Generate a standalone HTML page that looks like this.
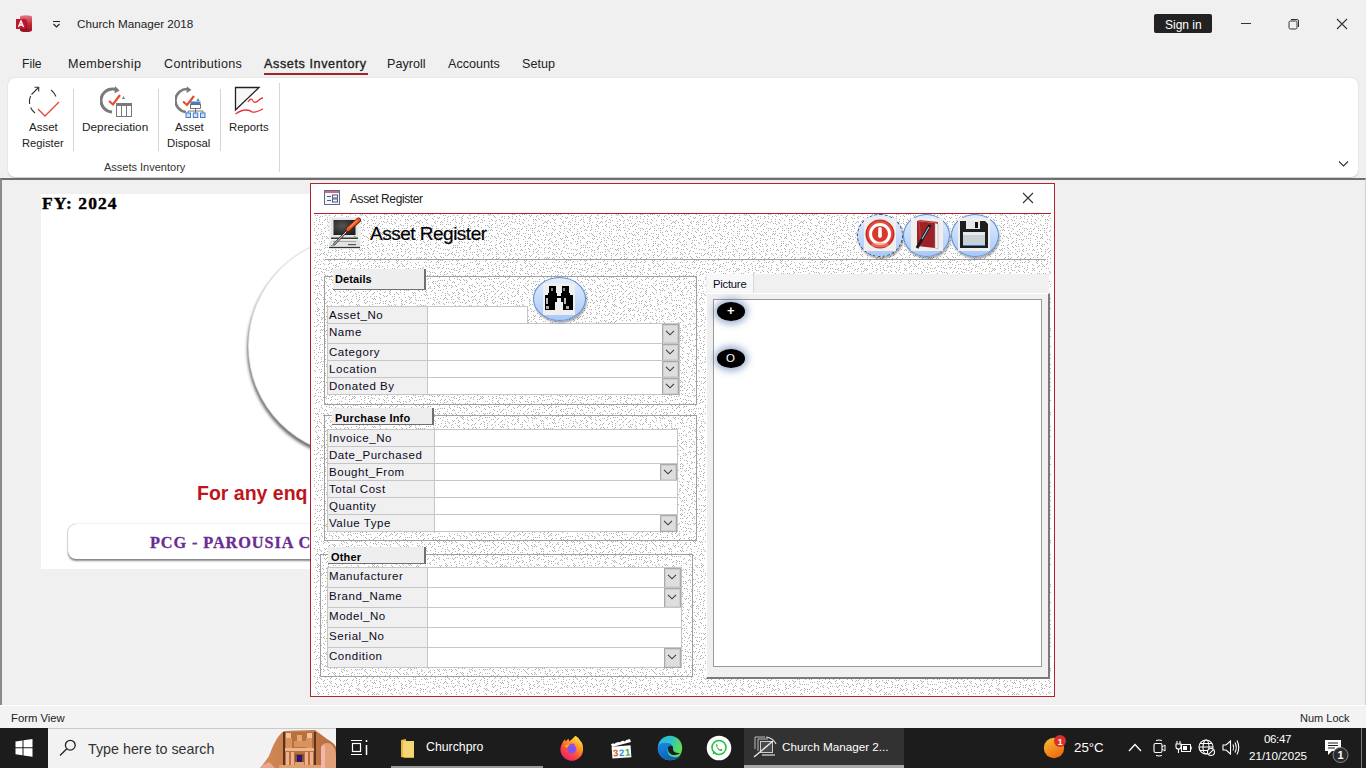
<!DOCTYPE html>
<html><head><meta charset="utf-8">
<style>
*{margin:0;padding:0;box-sizing:border-box}
html,body{width:1366px;height:768px;overflow:hidden;background:#f0f0f0;font-family:"Liberation Sans",sans-serif;color:#000}
.a{position:absolute}
.t{position:absolute;line-height:1;white-space:nowrap}
.ser{font-family:"Liberation Serif",serif}
</style></head><body>
<!-- svg defs -->
<svg width="0" height="0" style="position:absolute"><defs>
<pattern id="stip" width="128" height="128" patternUnits="userSpaceOnUse"><path fill="#b3b3b3" d="M1 1h1v1h-1zM3 1h1v1h-1zM5 3h1v1h-1zM6 2h1v1h-1zM8 2h1v1h-1zM11 1h1v1h-1zM15 1h1v1h-1zM13 3h1v1h-1zM19 3h1v1h-1zM17 3h1v1h-1zM21 1h1v1h-1zM20 2h1v1h-1zM27 1h1v1h-1zM25 3h1v1h-1zM28 0h1v1h-1zM31 3h1v1h-1zM34 2h1v1h-1zM32 2h1v1h-1zM37 3h1v1h-1zM36 0h1v1h-1zM41 1h1v1h-1zM41 3h1v1h-1zM47 1h1v1h-1zM46 0h1v1h-1zM48 0h1v1h-1zM51 1h1v1h-1zM53 3h1v1h-1zM52 2h1v1h-1zM59 3h1v1h-1zM56 0h1v1h-1zM62 2h1v1h-1zM60 2h1v1h-1zM67 3h1v1h-1zM66 2h1v1h-1zM70 0h1v1h-1zM70 2h1v1h-1zM74 2h1v1h-1zM72 0h1v1h-1zM77 1h1v1h-1zM78 2h1v1h-1zM82 0h1v1h-1zM80 0h1v1h-1zM84 0h1v1h-1zM87 1h1v1h-1zM89 1h1v1h-1zM88 2h1v1h-1zM94 2h1v1h-1zM95 1h1v1h-1zM99 3h1v1h-1zM98 0h1v1h-1zM101 1h1v1h-1zM102 2h1v1h-1zM104 0h1v1h-1zM107 1h1v1h-1zM111 1h1v1h-1zM108 0h1v1h-1zM115 1h1v1h-1zM114 0h1v1h-1zM118 0h1v1h-1zM116 0h1v1h-1zM123 3h1v1h-1zM120 2h1v1h-1zM125 3h1v1h-1zM126 0h1v1h-1zM2 6h1v1h-1zM2 4h1v1h-1zM5 7h1v1h-1zM5 5h1v1h-1zM10 6h1v1h-1zM11 5h1v1h-1zM13 7h1v1h-1zM13 5h1v1h-1zM19 7h1v1h-1zM19 5h1v1h-1zM20 6h1v1h-1zM20 4h1v1h-1zM26 4h1v1h-1zM27 7h1v1h-1zM31 7h1v1h-1zM28 4h1v1h-1zM35 7h1v1h-1zM32 4h1v1h-1zM39 5h1v1h-1zM36 6h1v1h-1zM42 6h1v1h-1zM40 6h1v1h-1zM46 4h1v1h-1zM47 7h1v1h-1zM49 5h1v1h-1zM50 6h1v1h-1zM54 6h1v1h-1zM53 7h1v1h-1zM58 6h1v1h-1zM57 5h1v1h-1zM60 6h1v1h-1zM62 4h1v1h-1zM66 4h1v1h-1zM67 7h1v1h-1zM70 4h1v1h-1zM69 7h1v1h-1zM73 5h1v1h-1zM73 7h1v1h-1zM77 7h1v1h-1zM77 5h1v1h-1zM81 5h1v1h-1zM82 6h1v1h-1zM84 4h1v1h-1zM86 6h1v1h-1zM91 5h1v1h-1zM91 7h1v1h-1zM93 5h1v1h-1zM94 6h1v1h-1zM96 4h1v1h-1zM97 5h1v1h-1zM103 7h1v1h-1zM100 6h1v1h-1zM105 7h1v1h-1zM106 6h1v1h-1zM111 5h1v1h-1zM110 4h1v1h-1zM113 5h1v1h-1zM112 6h1v1h-1zM118 4h1v1h-1zM119 5h1v1h-1zM121 7h1v1h-1zM123 7h1v1h-1zM127 7h1v1h-1zM124 4h1v1h-1zM0 10h1v1h-1zM0 8h1v1h-1zM4 10h1v1h-1zM6 10h1v1h-1zM8 10h1v1h-1zM8 8h1v1h-1zM13 11h1v1h-1zM14 8h1v1h-1zM17 9h1v1h-1zM19 9h1v1h-1zM22 8h1v1h-1zM21 11h1v1h-1zM26 10h1v1h-1zM27 11h1v1h-1zM29 9h1v1h-1zM30 8h1v1h-1zM35 11h1v1h-1zM32 8h1v1h-1zM36 10h1v1h-1zM38 8h1v1h-1zM43 11h1v1h-1zM40 8h1v1h-1zM47 9h1v1h-1zM45 11h1v1h-1zM50 10h1v1h-1zM49 11h1v1h-1zM53 9h1v1h-1zM55 11h1v1h-1zM57 11h1v1h-1zM59 9h1v1h-1zM63 11h1v1h-1zM61 9h1v1h-1zM65 9h1v1h-1zM64 10h1v1h-1zM68 10h1v1h-1zM70 8h1v1h-1zM72 8h1v1h-1zM75 9h1v1h-1zM77 9h1v1h-1zM78 10h1v1h-1zM80 8h1v1h-1zM81 9h1v1h-1zM86 10h1v1h-1zM87 11h1v1h-1zM91 9h1v1h-1zM89 11h1v1h-1zM93 11h1v1h-1zM93 9h1v1h-1zM97 11h1v1h-1zM99 11h1v1h-1zM101 9h1v1h-1zM102 8h1v1h-1zM105 9h1v1h-1zM104 8h1v1h-1zM109 11h1v1h-1zM108 8h1v1h-1zM113 9h1v1h-1zM112 8h1v1h-1zM119 11h1v1h-1zM117 11h1v1h-1zM121 9h1v1h-1zM120 8h1v1h-1zM126 8h1v1h-1zM126 10h1v1h-1zM0 14h1v1h-1zM2 12h1v1h-1zM4 14h1v1h-1zM7 15h1v1h-1zM10 14h1v1h-1zM11 13h1v1h-1zM15 15h1v1h-1zM14 12h1v1h-1zM17 13h1v1h-1zM18 12h1v1h-1zM21 13h1v1h-1zM21 15h1v1h-1zM25 15h1v1h-1zM26 12h1v1h-1zM28 12h1v1h-1zM28 14h1v1h-1zM32 12h1v1h-1zM33 15h1v1h-1zM36 12h1v1h-1zM39 13h1v1h-1zM43 15h1v1h-1zM41 15h1v1h-1zM46 12h1v1h-1zM47 13h1v1h-1zM49 13h1v1h-1zM49 15h1v1h-1zM55 13h1v1h-1zM53 13h1v1h-1zM58 14h1v1h-1zM59 15h1v1h-1zM60 12h1v1h-1zM62 12h1v1h-1zM65 15h1v1h-1zM66 12h1v1h-1zM68 14h1v1h-1zM70 14h1v1h-1zM72 14h1v1h-1zM73 15h1v1h-1zM79 15h1v1h-1zM76 14h1v1h-1zM82 12h1v1h-1zM80 14h1v1h-1zM84 12h1v1h-1zM84 14h1v1h-1zM90 14h1v1h-1zM88 14h1v1h-1zM92 14h1v1h-1zM93 13h1v1h-1zM99 13h1v1h-1zM96 12h1v1h-1zM102 14h1v1h-1zM102 12h1v1h-1zM106 14h1v1h-1zM104 12h1v1h-1zM110 14h1v1h-1zM111 15h1v1h-1zM113 15h1v1h-1zM112 12h1v1h-1zM118 12h1v1h-1zM118 14h1v1h-1zM122 12h1v1h-1zM122 14h1v1h-1zM127 15h1v1h-1zM124 14h1v1h-1zM0 16h1v1h-1zM2 18h1v1h-1zM7 19h1v1h-1zM7 17h1v1h-1zM9 19h1v1h-1zM11 17h1v1h-1zM14 16h1v1h-1zM15 19h1v1h-1zM16 16h1v1h-1zM19 19h1v1h-1zM21 19h1v1h-1zM20 16h1v1h-1zM27 17h1v1h-1zM25 17h1v1h-1zM29 19h1v1h-1zM30 18h1v1h-1zM33 19h1v1h-1zM35 17h1v1h-1zM39 17h1v1h-1zM39 19h1v1h-1zM41 19h1v1h-1zM41 17h1v1h-1zM47 19h1v1h-1zM46 16h1v1h-1zM50 16h1v1h-1zM48 16h1v1h-1zM55 19h1v1h-1zM54 16h1v1h-1zM59 19h1v1h-1zM57 17h1v1h-1zM63 17h1v1h-1zM61 19h1v1h-1zM67 19h1v1h-1zM66 18h1v1h-1zM68 18h1v1h-1zM70 16h1v1h-1zM75 19h1v1h-1zM75 17h1v1h-1zM77 19h1v1h-1zM77 17h1v1h-1zM81 19h1v1h-1zM83 19h1v1h-1zM84 16h1v1h-1zM86 16h1v1h-1zM90 18h1v1h-1zM90 16h1v1h-1zM92 18h1v1h-1zM95 17h1v1h-1zM97 17h1v1h-1zM96 16h1v1h-1zM101 17h1v1h-1zM100 16h1v1h-1zM104 18h1v1h-1zM107 19h1v1h-1zM109 19h1v1h-1zM110 18h1v1h-1zM115 19h1v1h-1zM112 16h1v1h-1zM117 17h1v1h-1zM118 18h1v1h-1zM121 19h1v1h-1zM122 16h1v1h-1zM126 18h1v1h-1zM125 17h1v1h-1zM3 21h1v1h-1zM1 21h1v1h-1zM6 20h1v1h-1zM4 20h1v1h-1zM10 22h1v1h-1zM8 22h1v1h-1zM12 22h1v1h-1zM13 23h1v1h-1zM17 21h1v1h-1zM18 22h1v1h-1zM23 21h1v1h-1zM22 20h1v1h-1zM24 22h1v1h-1zM26 22h1v1h-1zM29 23h1v1h-1zM30 20h1v1h-1zM33 23h1v1h-1zM35 21h1v1h-1zM37 23h1v1h-1zM39 21h1v1h-1zM43 23h1v1h-1zM40 22h1v1h-1zM44 22h1v1h-1zM46 22h1v1h-1zM49 21h1v1h-1zM50 22h1v1h-1zM53 23h1v1h-1zM52 22h1v1h-1zM56 22h1v1h-1zM56 20h1v1h-1zM63 21h1v1h-1zM62 20h1v1h-1zM64 20h1v1h-1zM65 21h1v1h-1zM70 22h1v1h-1zM68 20h1v1h-1zM74 20h1v1h-1zM72 22h1v1h-1zM76 20h1v1h-1zM79 21h1v1h-1zM83 23h1v1h-1zM82 22h1v1h-1zM87 23h1v1h-1zM86 20h1v1h-1zM88 20h1v1h-1zM88 22h1v1h-1zM93 21h1v1h-1zM92 20h1v1h-1zM96 22h1v1h-1zM98 20h1v1h-1zM103 23h1v1h-1zM101 21h1v1h-1zM104 20h1v1h-1zM105 21h1v1h-1zM109 21h1v1h-1zM110 20h1v1h-1zM113 23h1v1h-1zM112 22h1v1h-1zM116 20h1v1h-1zM117 21h1v1h-1zM123 21h1v1h-1zM123 23h1v1h-1zM125 23h1v1h-1zM124 22h1v1h-1zM3 25h1v1h-1zM2 24h1v1h-1zM7 27h1v1h-1zM5 27h1v1h-1zM8 24h1v1h-1zM10 26h1v1h-1zM14 24h1v1h-1zM12 24h1v1h-1zM17 27h1v1h-1zM19 27h1v1h-1zM23 25h1v1h-1zM22 24h1v1h-1zM24 24h1v1h-1zM27 25h1v1h-1zM31 27h1v1h-1zM31 25h1v1h-1zM34 26h1v1h-1zM34 24h1v1h-1zM36 26h1v1h-1zM38 24h1v1h-1zM42 26h1v1h-1zM41 25h1v1h-1zM44 26h1v1h-1zM46 26h1v1h-1zM48 24h1v1h-1zM49 27h1v1h-1zM54 24h1v1h-1zM54 26h1v1h-1zM58 24h1v1h-1zM59 27h1v1h-1zM62 24h1v1h-1zM62 26h1v1h-1zM67 25h1v1h-1zM65 25h1v1h-1zM68 26h1v1h-1zM69 25h1v1h-1zM72 24h1v1h-1zM74 24h1v1h-1zM76 24h1v1h-1zM76 26h1v1h-1zM83 27h1v1h-1zM81 25h1v1h-1zM85 27h1v1h-1zM86 24h1v1h-1zM88 24h1v1h-1zM91 27h1v1h-1zM95 25h1v1h-1zM93 25h1v1h-1zM96 26h1v1h-1zM99 25h1v1h-1zM103 25h1v1h-1zM102 26h1v1h-1zM107 25h1v1h-1zM106 26h1v1h-1zM109 27h1v1h-1zM108 24h1v1h-1zM114 26h1v1h-1zM113 27h1v1h-1zM119 25h1v1h-1zM118 24h1v1h-1zM120 24h1v1h-1zM122 26h1v1h-1zM126 26h1v1h-1zM124 26h1v1h-1zM1 29h1v1h-1zM0 28h1v1h-1zM6 30h1v1h-1zM7 29h1v1h-1zM11 31h1v1h-1zM10 28h1v1h-1zM15 31h1v1h-1zM13 31h1v1h-1zM16 28h1v1h-1zM17 29h1v1h-1zM20 28h1v1h-1zM22 28h1v1h-1zM26 28h1v1h-1zM25 29h1v1h-1zM29 31h1v1h-1zM30 28h1v1h-1zM35 31h1v1h-1zM34 30h1v1h-1zM38 30h1v1h-1zM36 28h1v1h-1zM42 30h1v1h-1zM42 28h1v1h-1zM44 30h1v1h-1zM47 31h1v1h-1zM48 28h1v1h-1zM49 31h1v1h-1zM53 31h1v1h-1zM54 30h1v1h-1zM57 29h1v1h-1zM58 28h1v1h-1zM61 31h1v1h-1zM62 28h1v1h-1zM67 29h1v1h-1zM64 30h1v1h-1zM68 30h1v1h-1zM69 31h1v1h-1zM75 31h1v1h-1zM74 30h1v1h-1zM78 30h1v1h-1zM76 28h1v1h-1zM83 29h1v1h-1zM83 31h1v1h-1zM85 29h1v1h-1zM87 31h1v1h-1zM90 30h1v1h-1zM88 30h1v1h-1zM93 29h1v1h-1zM92 28h1v1h-1zM97 31h1v1h-1zM96 30h1v1h-1zM100 28h1v1h-1zM102 30h1v1h-1zM107 29h1v1h-1zM106 30h1v1h-1zM110 28h1v1h-1zM111 31h1v1h-1zM114 30h1v1h-1zM112 30h1v1h-1zM116 30h1v1h-1zM116 28h1v1h-1zM121 29h1v1h-1zM122 28h1v1h-1zM125 31h1v1h-1zM124 30h1v1h-1zM3 35h1v1h-1zM1 35h1v1h-1zM7 35h1v1h-1zM5 35h1v1h-1zM11 33h1v1h-1zM10 34h1v1h-1zM15 33h1v1h-1zM13 33h1v1h-1zM17 33h1v1h-1zM19 33h1v1h-1zM21 35h1v1h-1zM22 32h1v1h-1zM27 35h1v1h-1zM27 33h1v1h-1zM28 34h1v1h-1zM28 32h1v1h-1zM35 35h1v1h-1zM34 32h1v1h-1zM36 32h1v1h-1zM37 35h1v1h-1zM42 34h1v1h-1zM40 34h1v1h-1zM47 35h1v1h-1zM45 35h1v1h-1zM48 34h1v1h-1zM50 34h1v1h-1zM53 33h1v1h-1zM54 34h1v1h-1zM59 33h1v1h-1zM58 32h1v1h-1zM61 35h1v1h-1zM62 32h1v1h-1zM65 35h1v1h-1zM64 32h1v1h-1zM68 32h1v1h-1zM69 35h1v1h-1zM72 34h1v1h-1zM75 35h1v1h-1zM79 35h1v1h-1zM78 32h1v1h-1zM83 35h1v1h-1zM82 32h1v1h-1zM87 35h1v1h-1zM86 34h1v1h-1zM88 32h1v1h-1zM91 35h1v1h-1zM94 34h1v1h-1zM93 35h1v1h-1zM97 33h1v1h-1zM99 33h1v1h-1zM102 34h1v1h-1zM103 33h1v1h-1zM106 34h1v1h-1zM107 33h1v1h-1zM111 35h1v1h-1zM108 34h1v1h-1zM114 32h1v1h-1zM113 35h1v1h-1zM116 34h1v1h-1zM117 35h1v1h-1zM122 32h1v1h-1zM121 33h1v1h-1zM124 34h1v1h-1zM126 34h1v1h-1zM3 39h1v1h-1zM1 39h1v1h-1zM6 36h1v1h-1zM7 39h1v1h-1zM10 38h1v1h-1zM9 39h1v1h-1zM14 36h1v1h-1zM14 38h1v1h-1zM16 38h1v1h-1zM18 36h1v1h-1zM21 37h1v1h-1zM22 36h1v1h-1zM24 38h1v1h-1zM24 36h1v1h-1zM28 38h1v1h-1zM30 38h1v1h-1zM35 37h1v1h-1zM32 38h1v1h-1zM39 37h1v1h-1zM38 36h1v1h-1zM43 39h1v1h-1zM41 39h1v1h-1zM47 39h1v1h-1zM46 36h1v1h-1zM48 36h1v1h-1zM50 38h1v1h-1zM54 38h1v1h-1zM55 39h1v1h-1zM58 38h1v1h-1zM56 36h1v1h-1zM63 37h1v1h-1zM61 39h1v1h-1zM65 37h1v1h-1zM67 39h1v1h-1zM68 36h1v1h-1zM69 37h1v1h-1zM73 39h1v1h-1zM72 36h1v1h-1zM78 36h1v1h-1zM77 39h1v1h-1zM80 36h1v1h-1zM82 38h1v1h-1zM87 37h1v1h-1zM84 38h1v1h-1zM91 39h1v1h-1zM91 37h1v1h-1zM94 38h1v1h-1zM95 37h1v1h-1zM96 36h1v1h-1zM98 38h1v1h-1zM102 38h1v1h-1zM102 36h1v1h-1zM106 38h1v1h-1zM107 37h1v1h-1zM111 39h1v1h-1zM110 38h1v1h-1zM115 39h1v1h-1zM114 38h1v1h-1zM119 37h1v1h-1zM119 39h1v1h-1zM123 37h1v1h-1zM120 36h1v1h-1zM127 39h1v1h-1zM125 39h1v1h-1zM3 41h1v1h-1zM1 43h1v1h-1zM6 40h1v1h-1zM5 41h1v1h-1zM11 43h1v1h-1zM10 40h1v1h-1zM13 41h1v1h-1zM12 40h1v1h-1zM16 42h1v1h-1zM17 41h1v1h-1zM22 42h1v1h-1zM21 41h1v1h-1zM27 41h1v1h-1zM24 40h1v1h-1zM31 43h1v1h-1zM30 40h1v1h-1zM35 41h1v1h-1zM34 40h1v1h-1zM36 40h1v1h-1zM36 42h1v1h-1zM41 41h1v1h-1zM41 43h1v1h-1zM45 41h1v1h-1zM46 40h1v1h-1zM50 40h1v1h-1zM51 43h1v1h-1zM54 40h1v1h-1zM54 42h1v1h-1zM57 43h1v1h-1zM56 40h1v1h-1zM62 40h1v1h-1zM63 43h1v1h-1zM67 41h1v1h-1zM64 42h1v1h-1zM68 40h1v1h-1zM71 43h1v1h-1zM75 41h1v1h-1zM74 40h1v1h-1zM78 40h1v1h-1zM79 43h1v1h-1zM83 41h1v1h-1zM83 43h1v1h-1zM84 40h1v1h-1zM87 41h1v1h-1zM88 42h1v1h-1zM89 41h1v1h-1zM94 42h1v1h-1zM93 43h1v1h-1zM97 43h1v1h-1zM96 40h1v1h-1zM103 43h1v1h-1zM100 40h1v1h-1zM105 43h1v1h-1zM107 43h1v1h-1zM111 43h1v1h-1zM110 40h1v1h-1zM112 40h1v1h-1zM114 42h1v1h-1zM118 40h1v1h-1zM117 43h1v1h-1zM120 42h1v1h-1zM121 43h1v1h-1zM127 43h1v1h-1zM126 42h1v1h-1zM0 46h1v1h-1zM3 47h1v1h-1zM5 45h1v1h-1zM7 47h1v1h-1zM10 46h1v1h-1zM9 45h1v1h-1zM15 47h1v1h-1zM14 46h1v1h-1zM16 46h1v1h-1zM19 45h1v1h-1zM20 46h1v1h-1zM20 44h1v1h-1zM26 44h1v1h-1zM25 45h1v1h-1zM30 44h1v1h-1zM31 45h1v1h-1zM34 46h1v1h-1zM33 47h1v1h-1zM37 45h1v1h-1zM37 47h1v1h-1zM41 45h1v1h-1zM43 47h1v1h-1zM44 46h1v1h-1zM47 45h1v1h-1zM50 44h1v1h-1zM49 45h1v1h-1zM55 47h1v1h-1zM54 44h1v1h-1zM56 44h1v1h-1zM57 45h1v1h-1zM61 47h1v1h-1zM60 46h1v1h-1zM66 44h1v1h-1zM66 46h1v1h-1zM71 47h1v1h-1zM70 44h1v1h-1zM74 46h1v1h-1zM75 47h1v1h-1zM79 45h1v1h-1zM76 44h1v1h-1zM83 47h1v1h-1zM82 46h1v1h-1zM84 46h1v1h-1zM87 47h1v1h-1zM90 46h1v1h-1zM91 45h1v1h-1zM93 45h1v1h-1zM93 47h1v1h-1zM96 44h1v1h-1zM99 45h1v1h-1zM103 45h1v1h-1zM102 44h1v1h-1zM104 44h1v1h-1zM106 44h1v1h-1zM111 45h1v1h-1zM110 44h1v1h-1zM114 46h1v1h-1zM112 44h1v1h-1zM119 45h1v1h-1zM117 47h1v1h-1zM123 47h1v1h-1zM122 44h1v1h-1zM126 46h1v1h-1zM124 46h1v1h-1zM1 51h1v1h-1zM2 48h1v1h-1zM4 50h1v1h-1zM6 50h1v1h-1zM9 49h1v1h-1zM10 50h1v1h-1zM14 50h1v1h-1zM15 49h1v1h-1zM17 49h1v1h-1zM19 51h1v1h-1zM22 50h1v1h-1zM21 51h1v1h-1zM25 49h1v1h-1zM27 51h1v1h-1zM30 48h1v1h-1zM28 48h1v1h-1zM35 49h1v1h-1zM34 50h1v1h-1zM36 50h1v1h-1zM37 49h1v1h-1zM41 51h1v1h-1zM43 51h1v1h-1zM45 49h1v1h-1zM46 50h1v1h-1zM49 51h1v1h-1zM48 48h1v1h-1zM52 50h1v1h-1zM53 49h1v1h-1zM59 49h1v1h-1zM57 51h1v1h-1zM63 49h1v1h-1zM61 51h1v1h-1zM66 48h1v1h-1zM65 51h1v1h-1zM68 48h1v1h-1zM70 48h1v1h-1zM73 51h1v1h-1zM74 48h1v1h-1zM79 51h1v1h-1zM78 50h1v1h-1zM83 49h1v1h-1zM82 48h1v1h-1zM85 51h1v1h-1zM87 49h1v1h-1zM88 50h1v1h-1zM89 51h1v1h-1zM93 49h1v1h-1zM92 50h1v1h-1zM97 51h1v1h-1zM96 48h1v1h-1zM101 49h1v1h-1zM102 50h1v1h-1zM104 48h1v1h-1zM105 51h1v1h-1zM110 48h1v1h-1zM111 51h1v1h-1zM115 51h1v1h-1zM112 48h1v1h-1zM119 51h1v1h-1zM116 48h1v1h-1zM122 48h1v1h-1zM122 50h1v1h-1zM126 50h1v1h-1zM124 48h1v1h-1zM1 53h1v1h-1zM0 54h1v1h-1zM4 54h1v1h-1zM6 54h1v1h-1zM11 55h1v1h-1zM9 55h1v1h-1zM12 54h1v1h-1zM15 53h1v1h-1zM17 55h1v1h-1zM18 54h1v1h-1zM22 52h1v1h-1zM21 53h1v1h-1zM26 54h1v1h-1zM24 52h1v1h-1zM29 55h1v1h-1zM31 55h1v1h-1zM32 54h1v1h-1zM35 53h1v1h-1zM38 54h1v1h-1zM39 55h1v1h-1zM40 54h1v1h-1zM41 55h1v1h-1zM46 54h1v1h-1zM46 52h1v1h-1zM50 54h1v1h-1zM51 55h1v1h-1zM54 54h1v1h-1zM54 52h1v1h-1zM57 53h1v1h-1zM57 55h1v1h-1zM62 52h1v1h-1zM61 53h1v1h-1zM65 53h1v1h-1zM64 52h1v1h-1zM70 54h1v1h-1zM68 52h1v1h-1zM73 53h1v1h-1zM73 55h1v1h-1zM78 54h1v1h-1zM79 55h1v1h-1zM83 53h1v1h-1zM80 54h1v1h-1zM84 52h1v1h-1zM87 55h1v1h-1zM88 52h1v1h-1zM90 52h1v1h-1zM94 54h1v1h-1zM92 54h1v1h-1zM99 53h1v1h-1zM97 55h1v1h-1zM101 53h1v1h-1zM101 55h1v1h-1zM106 54h1v1h-1zM104 54h1v1h-1zM109 53h1v1h-1zM108 54h1v1h-1zM115 53h1v1h-1zM112 52h1v1h-1zM117 53h1v1h-1zM118 54h1v1h-1zM120 54h1v1h-1zM123 53h1v1h-1zM124 54h1v1h-1zM125 53h1v1h-1zM3 57h1v1h-1zM2 58h1v1h-1zM5 59h1v1h-1zM7 57h1v1h-1zM8 58h1v1h-1zM10 58h1v1h-1zM12 56h1v1h-1zM14 56h1v1h-1zM16 58h1v1h-1zM17 57h1v1h-1zM23 57h1v1h-1zM21 57h1v1h-1zM25 59h1v1h-1zM27 59h1v1h-1zM31 57h1v1h-1zM28 56h1v1h-1zM35 59h1v1h-1zM35 57h1v1h-1zM37 57h1v1h-1zM38 56h1v1h-1zM43 59h1v1h-1zM40 56h1v1h-1zM45 59h1v1h-1zM47 57h1v1h-1zM50 56h1v1h-1zM50 58h1v1h-1zM55 59h1v1h-1zM54 56h1v1h-1zM58 56h1v1h-1zM56 58h1v1h-1zM60 56h1v1h-1zM62 58h1v1h-1zM64 56h1v1h-1zM65 57h1v1h-1zM69 57h1v1h-1zM70 58h1v1h-1zM72 56h1v1h-1zM74 58h1v1h-1zM78 56h1v1h-1zM77 59h1v1h-1zM83 59h1v1h-1zM80 56h1v1h-1zM85 59h1v1h-1zM85 57h1v1h-1zM89 59h1v1h-1zM91 59h1v1h-1zM95 59h1v1h-1zM95 57h1v1h-1zM96 58h1v1h-1zM98 56h1v1h-1zM100 58h1v1h-1zM102 58h1v1h-1zM107 57h1v1h-1zM105 57h1v1h-1zM110 56h1v1h-1zM111 59h1v1h-1zM113 57h1v1h-1zM115 57h1v1h-1zM118 58h1v1h-1zM116 58h1v1h-1zM120 58h1v1h-1zM121 59h1v1h-1zM126 58h1v1h-1zM127 57h1v1h-1zM2 60h1v1h-1zM1 61h1v1h-1zM4 60h1v1h-1zM7 63h1v1h-1zM11 61h1v1h-1zM10 60h1v1h-1zM15 63h1v1h-1zM13 61h1v1h-1zM19 63h1v1h-1zM17 61h1v1h-1zM23 61h1v1h-1zM22 62h1v1h-1zM27 63h1v1h-1zM25 61h1v1h-1zM31 61h1v1h-1zM30 62h1v1h-1zM34 62h1v1h-1zM33 61h1v1h-1zM39 63h1v1h-1zM36 62h1v1h-1zM41 63h1v1h-1zM43 63h1v1h-1zM47 61h1v1h-1zM46 62h1v1h-1zM48 62h1v1h-1zM50 60h1v1h-1zM53 61h1v1h-1zM52 62h1v1h-1zM57 61h1v1h-1zM56 60h1v1h-1zM61 61h1v1h-1zM63 63h1v1h-1zM67 63h1v1h-1zM67 61h1v1h-1zM68 62h1v1h-1zM70 60h1v1h-1zM72 62h1v1h-1zM72 60h1v1h-1zM78 60h1v1h-1zM77 63h1v1h-1zM80 62h1v1h-1zM83 63h1v1h-1zM86 60h1v1h-1zM87 63h1v1h-1zM89 61h1v1h-1zM90 62h1v1h-1zM92 60h1v1h-1zM92 62h1v1h-1zM99 61h1v1h-1zM98 62h1v1h-1zM101 63h1v1h-1zM102 62h1v1h-1zM105 63h1v1h-1zM106 62h1v1h-1zM109 63h1v1h-1zM109 61h1v1h-1zM113 61h1v1h-1zM115 61h1v1h-1zM119 61h1v1h-1zM116 60h1v1h-1zM120 62h1v1h-1zM123 61h1v1h-1zM125 63h1v1h-1zM126 60h1v1h-1zM0 66h1v1h-1zM2 66h1v1h-1zM5 67h1v1h-1zM7 65h1v1h-1zM8 66h1v1h-1zM11 67h1v1h-1zM15 65h1v1h-1zM12 64h1v1h-1zM18 66h1v1h-1zM17 65h1v1h-1zM22 66h1v1h-1zM21 65h1v1h-1zM25 67h1v1h-1zM24 66h1v1h-1zM28 64h1v1h-1zM29 65h1v1h-1zM33 65h1v1h-1zM34 64h1v1h-1zM37 65h1v1h-1zM36 64h1v1h-1zM42 66h1v1h-1zM43 67h1v1h-1zM47 65h1v1h-1zM46 64h1v1h-1zM49 65h1v1h-1zM51 67h1v1h-1zM54 64h1v1h-1zM52 64h1v1h-1zM56 64h1v1h-1zM57 67h1v1h-1zM63 67h1v1h-1zM61 67h1v1h-1zM65 65h1v1h-1zM66 64h1v1h-1zM69 67h1v1h-1zM71 65h1v1h-1zM72 66h1v1h-1zM75 65h1v1h-1zM76 64h1v1h-1zM78 64h1v1h-1zM81 65h1v1h-1zM82 64h1v1h-1zM85 67h1v1h-1zM86 66h1v1h-1zM91 67h1v1h-1zM90 64h1v1h-1zM93 67h1v1h-1zM95 67h1v1h-1zM97 67h1v1h-1zM97 65h1v1h-1zM102 64h1v1h-1zM102 66h1v1h-1zM107 65h1v1h-1zM106 66h1v1h-1zM109 65h1v1h-1zM108 64h1v1h-1zM114 64h1v1h-1zM113 65h1v1h-1zM116 64h1v1h-1zM119 67h1v1h-1zM121 67h1v1h-1zM123 67h1v1h-1zM126 66h1v1h-1zM124 66h1v1h-1zM1 71h1v1h-1zM3 71h1v1h-1zM7 71h1v1h-1zM5 69h1v1h-1zM10 68h1v1h-1zM9 71h1v1h-1zM13 71h1v1h-1zM12 68h1v1h-1zM16 70h1v1h-1zM18 68h1v1h-1zM22 70h1v1h-1zM20 70h1v1h-1zM27 71h1v1h-1zM24 68h1v1h-1zM30 70h1v1h-1zM29 71h1v1h-1zM34 68h1v1h-1zM35 69h1v1h-1zM37 71h1v1h-1zM39 69h1v1h-1zM43 71h1v1h-1zM41 71h1v1h-1zM47 71h1v1h-1zM45 71h1v1h-1zM48 70h1v1h-1zM51 71h1v1h-1zM52 68h1v1h-1zM55 69h1v1h-1zM59 69h1v1h-1zM58 70h1v1h-1zM60 68h1v1h-1zM61 71h1v1h-1zM64 70h1v1h-1zM66 68h1v1h-1zM71 71h1v1h-1zM69 69h1v1h-1zM72 70h1v1h-1zM75 71h1v1h-1zM77 71h1v1h-1zM78 68h1v1h-1zM81 71h1v1h-1zM83 69h1v1h-1zM86 70h1v1h-1zM85 71h1v1h-1zM91 69h1v1h-1zM89 69h1v1h-1zM94 70h1v1h-1zM93 71h1v1h-1zM96 70h1v1h-1zM97 71h1v1h-1zM100 70h1v1h-1zM102 70h1v1h-1zM107 71h1v1h-1zM104 68h1v1h-1zM110 68h1v1h-1zM109 69h1v1h-1zM114 68h1v1h-1zM114 70h1v1h-1zM118 68h1v1h-1zM119 69h1v1h-1zM123 71h1v1h-1zM121 69h1v1h-1zM125 71h1v1h-1zM125 69h1v1h-1zM1 75h1v1h-1zM2 72h1v1h-1zM4 74h1v1h-1zM4 72h1v1h-1zM9 73h1v1h-1zM10 72h1v1h-1zM14 72h1v1h-1zM15 75h1v1h-1zM18 74h1v1h-1zM19 75h1v1h-1zM21 75h1v1h-1zM20 74h1v1h-1zM25 75h1v1h-1zM27 73h1v1h-1zM30 72h1v1h-1zM28 74h1v1h-1zM33 73h1v1h-1zM32 72h1v1h-1zM37 75h1v1h-1zM38 74h1v1h-1zM43 75h1v1h-1zM42 72h1v1h-1zM45 75h1v1h-1zM47 75h1v1h-1zM51 73h1v1h-1zM50 72h1v1h-1zM52 74h1v1h-1zM53 75h1v1h-1zM59 73h1v1h-1zM56 72h1v1h-1zM61 73h1v1h-1zM62 74h1v1h-1zM67 73h1v1h-1zM64 72h1v1h-1zM70 74h1v1h-1zM68 74h1v1h-1zM73 75h1v1h-1zM72 74h1v1h-1zM79 73h1v1h-1zM76 74h1v1h-1zM82 72h1v1h-1zM83 73h1v1h-1zM84 74h1v1h-1zM85 75h1v1h-1zM90 72h1v1h-1zM89 75h1v1h-1zM92 74h1v1h-1zM93 75h1v1h-1zM96 72h1v1h-1zM98 74h1v1h-1zM103 73h1v1h-1zM103 75h1v1h-1zM105 75h1v1h-1zM107 73h1v1h-1zM110 74h1v1h-1zM108 72h1v1h-1zM114 74h1v1h-1zM115 73h1v1h-1zM116 74h1v1h-1zM116 72h1v1h-1zM120 72h1v1h-1zM120 74h1v1h-1zM125 73h1v1h-1zM124 72h1v1h-1zM3 79h1v1h-1zM0 78h1v1h-1zM5 79h1v1h-1zM5 77h1v1h-1zM11 79h1v1h-1zM10 78h1v1h-1zM14 76h1v1h-1zM12 78h1v1h-1zM16 78h1v1h-1zM17 79h1v1h-1zM20 76h1v1h-1zM21 77h1v1h-1zM26 78h1v1h-1zM25 77h1v1h-1zM29 77h1v1h-1zM30 78h1v1h-1zM32 76h1v1h-1zM34 76h1v1h-1zM37 77h1v1h-1zM36 78h1v1h-1zM40 76h1v1h-1zM41 79h1v1h-1zM44 78h1v1h-1zM47 79h1v1h-1zM49 77h1v1h-1zM51 77h1v1h-1zM55 77h1v1h-1zM53 79h1v1h-1zM56 76h1v1h-1zM59 79h1v1h-1zM60 78h1v1h-1zM63 77h1v1h-1zM66 76h1v1h-1zM65 79h1v1h-1zM70 78h1v1h-1zM71 77h1v1h-1zM75 79h1v1h-1zM75 77h1v1h-1zM76 78h1v1h-1zM76 76h1v1h-1zM83 79h1v1h-1zM82 78h1v1h-1zM86 78h1v1h-1zM86 76h1v1h-1zM90 78h1v1h-1zM90 76h1v1h-1zM92 76h1v1h-1zM94 76h1v1h-1zM99 79h1v1h-1zM98 78h1v1h-1zM101 79h1v1h-1zM100 78h1v1h-1zM105 77h1v1h-1zM104 76h1v1h-1zM108 76h1v1h-1zM111 77h1v1h-1zM112 78h1v1h-1zM112 76h1v1h-1zM117 77h1v1h-1zM118 76h1v1h-1zM120 78h1v1h-1zM121 79h1v1h-1zM124 76h1v1h-1zM126 76h1v1h-1zM3 81h1v1h-1zM3 83h1v1h-1zM7 81h1v1h-1zM6 80h1v1h-1zM10 82h1v1h-1zM9 83h1v1h-1zM15 83h1v1h-1zM13 81h1v1h-1zM16 80h1v1h-1zM17 83h1v1h-1zM21 81h1v1h-1zM22 80h1v1h-1zM26 82h1v1h-1zM25 81h1v1h-1zM29 83h1v1h-1zM30 82h1v1h-1zM32 82h1v1h-1zM33 81h1v1h-1zM38 82h1v1h-1zM39 81h1v1h-1zM42 82h1v1h-1zM42 80h1v1h-1zM45 81h1v1h-1zM45 83h1v1h-1zM50 82h1v1h-1zM49 83h1v1h-1zM52 80h1v1h-1zM53 83h1v1h-1zM56 82h1v1h-1zM58 80h1v1h-1zM60 82h1v1h-1zM62 82h1v1h-1zM65 83h1v1h-1zM66 80h1v1h-1zM70 82h1v1h-1zM69 81h1v1h-1zM73 81h1v1h-1zM72 82h1v1h-1zM76 80h1v1h-1zM78 82h1v1h-1zM80 80h1v1h-1zM80 82h1v1h-1zM84 80h1v1h-1zM85 83h1v1h-1zM91 83h1v1h-1zM90 80h1v1h-1zM95 83h1v1h-1zM94 82h1v1h-1zM97 83h1v1h-1zM99 81h1v1h-1zM101 81h1v1h-1zM101 83h1v1h-1zM105 83h1v1h-1zM107 81h1v1h-1zM111 81h1v1h-1zM110 80h1v1h-1zM112 80h1v1h-1zM113 81h1v1h-1zM119 83h1v1h-1zM116 80h1v1h-1zM121 83h1v1h-1zM121 81h1v1h-1zM124 82h1v1h-1zM127 81h1v1h-1zM2 84h1v1h-1zM1 85h1v1h-1zM4 84h1v1h-1zM5 85h1v1h-1zM11 85h1v1h-1zM9 85h1v1h-1zM15 87h1v1h-1zM13 87h1v1h-1zM17 85h1v1h-1zM16 84h1v1h-1zM22 86h1v1h-1zM21 85h1v1h-1zM27 87h1v1h-1zM26 86h1v1h-1zM30 86h1v1h-1zM31 85h1v1h-1zM33 85h1v1h-1zM34 86h1v1h-1zM37 87h1v1h-1zM37 85h1v1h-1zM43 87h1v1h-1zM42 84h1v1h-1zM45 85h1v1h-1zM44 86h1v1h-1zM51 85h1v1h-1zM50 86h1v1h-1zM55 87h1v1h-1zM53 87h1v1h-1zM58 84h1v1h-1zM59 85h1v1h-1zM61 85h1v1h-1zM60 84h1v1h-1zM66 86h1v1h-1zM66 84h1v1h-1zM71 87h1v1h-1zM69 87h1v1h-1zM72 86h1v1h-1zM75 87h1v1h-1zM79 87h1v1h-1zM79 85h1v1h-1zM82 86h1v1h-1zM80 84h1v1h-1zM87 85h1v1h-1zM87 87h1v1h-1zM88 86h1v1h-1zM91 87h1v1h-1zM95 85h1v1h-1zM92 86h1v1h-1zM96 84h1v1h-1zM97 87h1v1h-1zM102 86h1v1h-1zM101 85h1v1h-1zM104 86h1v1h-1zM106 86h1v1h-1zM110 86h1v1h-1zM108 86h1v1h-1zM112 84h1v1h-1zM114 84h1v1h-1zM116 84h1v1h-1zM119 85h1v1h-1zM120 86h1v1h-1zM123 85h1v1h-1zM126 84h1v1h-1zM125 87h1v1h-1zM1 89h1v1h-1zM2 90h1v1h-1zM6 88h1v1h-1zM4 88h1v1h-1zM11 89h1v1h-1zM10 88h1v1h-1zM13 91h1v1h-1zM12 88h1v1h-1zM17 91h1v1h-1zM18 88h1v1h-1zM23 89h1v1h-1zM20 88h1v1h-1zM27 91h1v1h-1zM24 88h1v1h-1zM30 88h1v1h-1zM29 91h1v1h-1zM35 91h1v1h-1zM35 89h1v1h-1zM36 88h1v1h-1zM38 88h1v1h-1zM43 91h1v1h-1zM42 90h1v1h-1zM45 91h1v1h-1zM44 90h1v1h-1zM51 89h1v1h-1zM50 88h1v1h-1zM52 88h1v1h-1zM55 91h1v1h-1zM58 90h1v1h-1zM58 88h1v1h-1zM63 89h1v1h-1zM61 89h1v1h-1zM66 88h1v1h-1zM65 89h1v1h-1zM69 89h1v1h-1zM71 89h1v1h-1zM74 90h1v1h-1zM75 91h1v1h-1zM77 91h1v1h-1zM76 88h1v1h-1zM80 90h1v1h-1zM81 91h1v1h-1zM87 91h1v1h-1zM87 89h1v1h-1zM88 90h1v1h-1zM90 90h1v1h-1zM92 88h1v1h-1zM95 89h1v1h-1zM99 89h1v1h-1zM96 88h1v1h-1zM101 89h1v1h-1zM103 91h1v1h-1zM107 91h1v1h-1zM106 90h1v1h-1zM111 91h1v1h-1zM109 91h1v1h-1zM114 88h1v1h-1zM113 89h1v1h-1zM118 90h1v1h-1zM119 89h1v1h-1zM122 88h1v1h-1zM120 90h1v1h-1zM124 88h1v1h-1zM125 89h1v1h-1zM3 93h1v1h-1zM3 95h1v1h-1zM4 94h1v1h-1zM5 95h1v1h-1zM9 95h1v1h-1zM8 92h1v1h-1zM14 94h1v1h-1zM12 92h1v1h-1zM17 93h1v1h-1zM19 95h1v1h-1zM21 95h1v1h-1zM20 92h1v1h-1zM25 93h1v1h-1zM25 95h1v1h-1zM28 94h1v1h-1zM29 93h1v1h-1zM34 92h1v1h-1zM35 93h1v1h-1zM37 95h1v1h-1zM36 92h1v1h-1zM41 93h1v1h-1zM43 95h1v1h-1zM44 92h1v1h-1zM46 92h1v1h-1zM49 93h1v1h-1zM50 94h1v1h-1zM53 93h1v1h-1zM54 92h1v1h-1zM59 95h1v1h-1zM58 94h1v1h-1zM63 95h1v1h-1zM60 94h1v1h-1zM66 92h1v1h-1zM65 93h1v1h-1zM71 95h1v1h-1zM68 94h1v1h-1zM73 93h1v1h-1zM74 92h1v1h-1zM76 92h1v1h-1zM77 95h1v1h-1zM82 94h1v1h-1zM80 92h1v1h-1zM85 95h1v1h-1zM84 92h1v1h-1zM88 94h1v1h-1zM89 95h1v1h-1zM94 94h1v1h-1zM95 95h1v1h-1zM96 94h1v1h-1zM97 95h1v1h-1zM102 92h1v1h-1zM103 95h1v1h-1zM106 94h1v1h-1zM106 92h1v1h-1zM111 95h1v1h-1zM109 93h1v1h-1zM113 93h1v1h-1zM115 93h1v1h-1zM116 94h1v1h-1zM116 92h1v1h-1zM120 94h1v1h-1zM122 92h1v1h-1zM125 95h1v1h-1zM127 95h1v1h-1zM1 97h1v1h-1zM3 97h1v1h-1zM5 99h1v1h-1zM4 96h1v1h-1zM8 98h1v1h-1zM9 99h1v1h-1zM12 98h1v1h-1zM14 96h1v1h-1zM17 99h1v1h-1zM16 98h1v1h-1zM21 99h1v1h-1zM20 98h1v1h-1zM27 99h1v1h-1zM26 98h1v1h-1zM29 97h1v1h-1zM29 99h1v1h-1zM35 97h1v1h-1zM32 96h1v1h-1zM39 99h1v1h-1zM39 97h1v1h-1zM42 98h1v1h-1zM43 99h1v1h-1zM47 99h1v1h-1zM44 96h1v1h-1zM48 98h1v1h-1zM51 99h1v1h-1zM54 96h1v1h-1zM53 97h1v1h-1zM59 97h1v1h-1zM58 96h1v1h-1zM62 96h1v1h-1zM60 96h1v1h-1zM67 97h1v1h-1zM64 96h1v1h-1zM70 98h1v1h-1zM68 96h1v1h-1zM75 99h1v1h-1zM73 99h1v1h-1zM78 96h1v1h-1zM76 98h1v1h-1zM82 98h1v1h-1zM80 98h1v1h-1zM86 96h1v1h-1zM85 99h1v1h-1zM91 97h1v1h-1zM89 97h1v1h-1zM95 99h1v1h-1zM92 96h1v1h-1zM98 98h1v1h-1zM99 99h1v1h-1zM103 99h1v1h-1zM102 96h1v1h-1zM105 99h1v1h-1zM104 96h1v1h-1zM111 97h1v1h-1zM108 98h1v1h-1zM115 99h1v1h-1zM113 99h1v1h-1zM119 97h1v1h-1zM119 99h1v1h-1zM121 97h1v1h-1zM123 99h1v1h-1zM127 97h1v1h-1zM126 96h1v1h-1zM3 101h1v1h-1zM2 100h1v1h-1zM5 101h1v1h-1zM7 103h1v1h-1zM10 102h1v1h-1zM9 103h1v1h-1zM13 101h1v1h-1zM12 102h1v1h-1zM17 103h1v1h-1zM19 103h1v1h-1zM23 103h1v1h-1zM20 100h1v1h-1zM26 100h1v1h-1zM25 103h1v1h-1zM31 101h1v1h-1zM31 103h1v1h-1zM34 100h1v1h-1zM35 101h1v1h-1zM38 100h1v1h-1zM37 101h1v1h-1zM41 101h1v1h-1zM43 103h1v1h-1zM47 103h1v1h-1zM46 100h1v1h-1zM51 103h1v1h-1zM50 100h1v1h-1zM54 100h1v1h-1zM53 101h1v1h-1zM56 100h1v1h-1zM56 102h1v1h-1zM60 100h1v1h-1zM63 101h1v1h-1zM64 100h1v1h-1zM64 102h1v1h-1zM69 101h1v1h-1zM68 100h1v1h-1zM73 101h1v1h-1zM75 103h1v1h-1zM76 102h1v1h-1zM77 101h1v1h-1zM82 102h1v1h-1zM80 102h1v1h-1zM85 101h1v1h-1zM86 102h1v1h-1zM91 101h1v1h-1zM89 103h1v1h-1zM92 102h1v1h-1zM93 101h1v1h-1zM97 103h1v1h-1zM98 102h1v1h-1zM100 100h1v1h-1zM101 101h1v1h-1zM104 100h1v1h-1zM104 102h1v1h-1zM109 103h1v1h-1zM111 101h1v1h-1zM114 102h1v1h-1zM112 100h1v1h-1zM116 102h1v1h-1zM116 100h1v1h-1zM122 102h1v1h-1zM121 101h1v1h-1zM124 100h1v1h-1zM124 102h1v1h-1zM3 107h1v1h-1zM3 105h1v1h-1zM4 106h1v1h-1zM7 105h1v1h-1zM11 105h1v1h-1zM8 104h1v1h-1zM14 104h1v1h-1zM15 107h1v1h-1zM16 104h1v1h-1zM19 107h1v1h-1zM21 105h1v1h-1zM21 107h1v1h-1zM26 104h1v1h-1zM24 104h1v1h-1zM31 107h1v1h-1zM30 106h1v1h-1zM35 107h1v1h-1zM34 106h1v1h-1zM36 106h1v1h-1zM39 105h1v1h-1zM41 107h1v1h-1zM43 105h1v1h-1zM45 107h1v1h-1zM46 106h1v1h-1zM49 105h1v1h-1zM50 104h1v1h-1zM54 104h1v1h-1zM52 106h1v1h-1zM59 105h1v1h-1zM56 106h1v1h-1zM62 104h1v1h-1zM60 106h1v1h-1zM67 105h1v1h-1zM67 107h1v1h-1zM70 106h1v1h-1zM70 104h1v1h-1zM75 105h1v1h-1zM74 106h1v1h-1zM78 104h1v1h-1zM76 104h1v1h-1zM82 104h1v1h-1zM83 105h1v1h-1zM87 105h1v1h-1zM86 106h1v1h-1zM89 107h1v1h-1zM91 105h1v1h-1zM92 104h1v1h-1zM93 107h1v1h-1zM99 105h1v1h-1zM97 105h1v1h-1zM101 107h1v1h-1zM103 107h1v1h-1zM105 105h1v1h-1zM106 104h1v1h-1zM110 104h1v1h-1zM111 105h1v1h-1zM113 107h1v1h-1zM112 106h1v1h-1zM119 105h1v1h-1zM116 104h1v1h-1zM121 105h1v1h-1zM120 104h1v1h-1zM126 104h1v1h-1zM127 105h1v1h-1zM3 111h1v1h-1zM0 108h1v1h-1zM6 108h1v1h-1zM4 110h1v1h-1zM11 111h1v1h-1zM8 108h1v1h-1zM15 111h1v1h-1zM12 108h1v1h-1zM16 110h1v1h-1zM17 111h1v1h-1zM21 109h1v1h-1zM21 111h1v1h-1zM26 108h1v1h-1zM27 111h1v1h-1zM29 109h1v1h-1zM28 108h1v1h-1zM32 110h1v1h-1zM33 109h1v1h-1zM39 111h1v1h-1zM38 108h1v1h-1zM43 109h1v1h-1zM40 108h1v1h-1zM44 108h1v1h-1zM44 110h1v1h-1zM49 111h1v1h-1zM49 109h1v1h-1zM55 111h1v1h-1zM54 110h1v1h-1zM59 111h1v1h-1zM59 109h1v1h-1zM63 109h1v1h-1zM62 110h1v1h-1zM66 110h1v1h-1zM65 111h1v1h-1zM70 110h1v1h-1zM69 109h1v1h-1zM75 111h1v1h-1zM73 109h1v1h-1zM79 111h1v1h-1zM77 111h1v1h-1zM80 108h1v1h-1zM81 111h1v1h-1zM85 109h1v1h-1zM86 108h1v1h-1zM90 110h1v1h-1zM88 110h1v1h-1zM94 108h1v1h-1zM93 111h1v1h-1zM98 110h1v1h-1zM97 109h1v1h-1zM101 109h1v1h-1zM103 109h1v1h-1zM104 110h1v1h-1zM107 111h1v1h-1zM110 108h1v1h-1zM108 108h1v1h-1zM113 111h1v1h-1zM115 111h1v1h-1zM119 109h1v1h-1zM118 110h1v1h-1zM120 110h1v1h-1zM123 109h1v1h-1zM127 111h1v1h-1zM125 109h1v1h-1zM0 112h1v1h-1zM2 112h1v1h-1zM6 112h1v1h-1zM7 115h1v1h-1zM9 115h1v1h-1zM8 112h1v1h-1zM13 115h1v1h-1zM14 112h1v1h-1zM18 112h1v1h-1zM18 114h1v1h-1zM23 115h1v1h-1zM21 113h1v1h-1zM25 115h1v1h-1zM27 115h1v1h-1zM29 115h1v1h-1zM30 112h1v1h-1zM35 115h1v1h-1zM32 112h1v1h-1zM38 112h1v1h-1zM37 113h1v1h-1zM40 114h1v1h-1zM40 112h1v1h-1zM45 115h1v1h-1zM47 115h1v1h-1zM51 113h1v1h-1zM49 113h1v1h-1zM54 114h1v1h-1zM53 115h1v1h-1zM58 112h1v1h-1zM59 115h1v1h-1zM60 112h1v1h-1zM61 115h1v1h-1zM65 113h1v1h-1zM64 112h1v1h-1zM68 112h1v1h-1zM70 112h1v1h-1zM75 115h1v1h-1zM72 114h1v1h-1zM78 114h1v1h-1zM76 112h1v1h-1zM82 112h1v1h-1zM81 113h1v1h-1zM84 114h1v1h-1zM86 114h1v1h-1zM90 114h1v1h-1zM88 112h1v1h-1zM93 113h1v1h-1zM95 113h1v1h-1zM97 113h1v1h-1zM96 114h1v1h-1zM102 112h1v1h-1zM101 113h1v1h-1zM105 115h1v1h-1zM106 112h1v1h-1zM110 114h1v1h-1zM108 112h1v1h-1zM113 113h1v1h-1zM115 113h1v1h-1zM116 112h1v1h-1zM117 115h1v1h-1zM123 115h1v1h-1zM120 112h1v1h-1zM125 113h1v1h-1zM124 114h1v1h-1zM2 116h1v1h-1zM1 117h1v1h-1zM6 116h1v1h-1zM6 118h1v1h-1zM8 116h1v1h-1zM11 117h1v1h-1zM15 117h1v1h-1zM12 116h1v1h-1zM19 119h1v1h-1zM17 119h1v1h-1zM21 117h1v1h-1zM22 116h1v1h-1zM25 119h1v1h-1zM24 118h1v1h-1zM31 117h1v1h-1zM29 117h1v1h-1zM33 119h1v1h-1zM35 119h1v1h-1zM36 118h1v1h-1zM36 116h1v1h-1zM40 116h1v1h-1zM43 119h1v1h-1zM44 116h1v1h-1zM47 119h1v1h-1zM49 119h1v1h-1zM49 117h1v1h-1zM55 119h1v1h-1zM52 118h1v1h-1zM57 117h1v1h-1zM59 117h1v1h-1zM61 117h1v1h-1zM60 116h1v1h-1zM67 119h1v1h-1zM66 116h1v1h-1zM71 119h1v1h-1zM69 119h1v1h-1zM73 117h1v1h-1zM73 119h1v1h-1zM78 118h1v1h-1zM76 118h1v1h-1zM83 119h1v1h-1zM81 117h1v1h-1zM86 116h1v1h-1zM87 119h1v1h-1zM91 119h1v1h-1zM90 118h1v1h-1zM93 119h1v1h-1zM94 118h1v1h-1zM98 116h1v1h-1zM96 116h1v1h-1zM102 116h1v1h-1zM103 119h1v1h-1zM104 118h1v1h-1zM104 116h1v1h-1zM110 118h1v1h-1zM110 116h1v1h-1zM112 116h1v1h-1zM114 118h1v1h-1zM116 118h1v1h-1zM117 119h1v1h-1zM121 119h1v1h-1zM120 116h1v1h-1zM126 116h1v1h-1zM127 119h1v1h-1zM1 121h1v1h-1zM1 123h1v1h-1zM6 122h1v1h-1zM5 123h1v1h-1zM9 121h1v1h-1zM10 120h1v1h-1zM14 122h1v1h-1zM12 120h1v1h-1zM18 120h1v1h-1zM19 123h1v1h-1zM22 122h1v1h-1zM20 120h1v1h-1zM25 121h1v1h-1zM24 120h1v1h-1zM30 120h1v1h-1zM29 121h1v1h-1zM34 122h1v1h-1zM35 123h1v1h-1zM38 120h1v1h-1zM39 121h1v1h-1zM43 123h1v1h-1zM41 123h1v1h-1zM44 122h1v1h-1zM44 120h1v1h-1zM51 121h1v1h-1zM49 121h1v1h-1zM52 120h1v1h-1zM54 122h1v1h-1zM59 121h1v1h-1zM58 122h1v1h-1zM62 120h1v1h-1zM63 123h1v1h-1zM65 121h1v1h-1zM67 123h1v1h-1zM69 123h1v1h-1zM71 123h1v1h-1zM75 121h1v1h-1zM75 123h1v1h-1zM77 121h1v1h-1zM79 123h1v1h-1zM83 121h1v1h-1zM81 123h1v1h-1zM85 123h1v1h-1zM87 121h1v1h-1zM88 122h1v1h-1zM91 121h1v1h-1zM94 122h1v1h-1zM94 120h1v1h-1zM97 123h1v1h-1zM96 122h1v1h-1zM101 121h1v1h-1zM103 123h1v1h-1zM106 120h1v1h-1zM105 121h1v1h-1zM110 122h1v1h-1zM111 121h1v1h-1zM113 123h1v1h-1zM112 122h1v1h-1zM119 123h1v1h-1zM117 121h1v1h-1zM121 121h1v1h-1zM122 120h1v1h-1zM127 121h1v1h-1zM124 120h1v1h-1zM2 126h1v1h-1zM2 124h1v1h-1zM6 124h1v1h-1zM5 127h1v1h-1zM11 127h1v1h-1zM11 125h1v1h-1zM15 125h1v1h-1zM14 126h1v1h-1zM19 125h1v1h-1zM18 124h1v1h-1zM23 127h1v1h-1zM22 126h1v1h-1zM26 124h1v1h-1zM24 126h1v1h-1zM30 124h1v1h-1zM28 124h1v1h-1zM35 125h1v1h-1zM33 127h1v1h-1zM39 127h1v1h-1zM38 124h1v1h-1zM41 125h1v1h-1zM42 126h1v1h-1zM47 125h1v1h-1zM47 127h1v1h-1zM49 127h1v1h-1zM50 124h1v1h-1zM54 126h1v1h-1zM55 125h1v1h-1zM56 124h1v1h-1zM57 127h1v1h-1zM63 125h1v1h-1zM60 126h1v1h-1zM66 124h1v1h-1zM66 126h1v1h-1zM70 126h1v1h-1zM71 127h1v1h-1zM73 127h1v1h-1zM73 125h1v1h-1zM76 126h1v1h-1zM79 127h1v1h-1zM83 125h1v1h-1zM81 125h1v1h-1zM85 125h1v1h-1zM84 126h1v1h-1zM91 127h1v1h-1zM88 124h1v1h-1zM94 124h1v1h-1zM92 126h1v1h-1zM98 126h1v1h-1zM98 124h1v1h-1zM103 127h1v1h-1zM101 127h1v1h-1zM105 127h1v1h-1zM106 126h1v1h-1zM110 124h1v1h-1zM110 126h1v1h-1zM112 124h1v1h-1zM112 126h1v1h-1zM119 125h1v1h-1zM116 126h1v1h-1zM120 126h1v1h-1zM122 126h1v1h-1zM125 125h1v1h-1zM127 125h1v1h-1z"/></pattern>
</defs></svg>

<!-- TITLE BAR -->
<div class="a" style="left:0;top:0;width:1366px;height:178px;background:#f0f0f0"></div>
<!-- access icon -->
<svg class="a" style="left:15px;top:15px" width="19" height="18" viewBox="0 0 19 18">
<defs><linearGradient id="acg" x1="0" y1="0" x2="0" y2="1"><stop offset="0" stop-color="#e27a8a"/><stop offset="0.5" stop-color="#c8283a"/><stop offset="1" stop-color="#9a1020"/></linearGradient></defs>
<path d="M5 2 Q5 0.3 11 0.3 Q17 0.3 17 2 V15 Q17 17 11 17 Q5 17 5 15Z" fill="url(#acg)"/>
<rect x="5" y="5.5" width="7" height="9.5" fill="#5a0a14" opacity=".5"/>
<rect x="1" y="4" width="10" height="10" fill="#b81c2e"/>
<path d="M3.5 12 L6 6 L8.5 12 M4.4 10 H7.6" stroke="#fff" stroke-width="1.3" fill="none"/>
</svg>
<svg class="a" style="left:52px;top:20px" width="9" height="8" viewBox="0 0 9 8"><path d="M1 1.5H8M1.5 4 L4.5 7 L7.5 4" stroke="#222" stroke-width="1.2" fill="none"/></svg>
<div class="t" style="left:77px;top:18px;font-size:11.7px;color:#222">Church Manager 2018</div>
<div class="a" style="left:1154px;top:14px;width:58px;height:19px;background:#222;border-radius:2px"></div>
<div class="t" style="left:1165px;top:18.5px;font-size:12px;color:#fff">Sign in</div>
<div class="a" style="left:1241px;top:23px;width:10px;height:1px;background:#333"></div>
<svg class="a" style="left:1288px;top:18px" width="12" height="12" viewBox="0 0 12 12"><rect x="1" y="3" width="8" height="8" rx="1.5" fill="none" stroke="#333"/><path d="M3 1.5 H9 Q10.5 1.5 10.5 3 V9" fill="none" stroke="#333"/></svg>
<svg class="a" style="left:1336px;top:18px" width="12" height="12" viewBox="0 0 12 12"><path d="M1 1 L11 11 M11 1 L1 11" stroke="#333" stroke-width="1.1"/></svg>

<!-- MENU -->
<div class="t" style="left:22px;top:58px;font-size:12.2px;color:#222">File</div>
<div class="t" style="left:68px;top:58px;font-size:12.6px;color:#222;letter-spacing:0.4px">Membership</div>
<div class="t" style="left:164px;top:58px;font-size:12.6px;color:#222;letter-spacing:0.3px">Contributions</div>
<div class="t" style="left:264px;top:58px;font-size:12.6px;color:#222;letter-spacing:0.6px;-webkit-text-stroke:0.35px #222">Assets Inventory</div>
<div class="a" style="left:264px;top:73px;width:104px;height:2px;background:#a4262c"></div>
<div class="t" style="left:387px;top:58px;font-size:12.6px;color:#222">Payroll</div>
<div class="t" style="left:448px;top:58px;font-size:12.6px;color:#222">Accounts</div>
<div class="t" style="left:522px;top:58px;font-size:12.6px;color:#222">Setup</div>

<!-- RIBBON -->
<div class="a" style="left:8px;top:78px;width:1350px;height:99px;background:#fff;border-radius:7px;box-shadow:0 0.5px 1.5px rgba(0,0,0,.18)"></div>
<div class="a" style="left:73px;top:89px;width:1px;height:62px;background:#d6d6d6"></div>
<div class="a" style="left:158px;top:89px;width:1px;height:62px;background:#d6d6d6"></div>
<div class="a" style="left:220px;top:89px;width:1px;height:62px;background:#d6d6d6"></div>
<div class="a" style="left:279px;top:83px;width:1px;height:89px;background:#d6d6d6"></div>
<div class="t" style="left:29px;top:122px;font-size:11.5px;color:#222">Asset</div>
<div class="t" style="left:22px;top:138px;font-size:11.2px;color:#222">Register</div>
<div class="t" style="left:82px;top:122px;font-size:11.8px;color:#222">Depreciation</div>
<div class="t" style="left:175px;top:122px;font-size:11.5px;color:#222">Asset</div>
<div class="t" style="left:167px;top:138px;font-size:11.3px;color:#222">Disposal</div>
<div class="t" style="left:229px;top:122px;font-size:11.3px;color:#222">Reports</div>
<div class="t" style="left:104px;top:162px;font-size:11px;color:#333">Assets Inventory</div>
<svg class="a" style="left:1338px;top:160px" width="11" height="8" viewBox="0 0 11 8"><path d="M1 1.5 L5.5 6 L10 1.5" stroke="#333" stroke-width="1.1" fill="none"/></svg>

<!-- MAIN MDI AREA -->
<div class="a" style="left:0;top:178px;width:1366px;height:527px;background:#f0f0f0;border-top:2px solid #6e6e6e;border-left:2px solid #8a8a8a;border-right:1px solid #d0d0d0"></div>
<!-- backing form -->
<div class="a" style="left:41px;top:194px;width:300px;height:375px;background:#fff"></div>
<div class="t ser" style="left:42px;top:195px;font-size:17.5px;font-weight:700;letter-spacing:1.1px;-webkit-text-stroke:0.4px #000">FY: 2024</div>
<div class="a" style="left:248px;top:236px;width:220px;height:220px;border-radius:50%;background:#fff;border:1px solid rgba(0,0,0,.12);box-shadow:-1px 3px 3px rgba(0,0,0,.55)"></div>
<div class="t" style="left:197px;top:484px;font-size:19.5px;font-weight:700;color:#c0141c">For any enq</div>
<div class="a" style="left:68px;top:524px;width:300px;height:35px;background:#fff;border-radius:8px;box-shadow:0 2px 2px rgba(0,0,0,.45), 0 0 1px rgba(0,0,0,.5)"></div>
<div class="t ser" style="left:150px;top:535px;font-size:16.3px;font-weight:700;color:#6a2c91;letter-spacing:0.9px;-webkit-text-stroke:0.3px #6a2c91">PCG - PAROUSIA C</div>

<!-- STATUS BAR -->
<div class="a" style="left:0;top:705px;width:1366px;height:23px;background:#f3f3f3;border-top:1px solid #fff"></div>
<div class="t" style="left:11px;top:713px;font-size:11.3px;color:#222">Form View</div>
<div class="t" style="left:1300px;top:713px;font-size:11px;color:#222">Num Lock</div>

<!-- TASKBAR -->
<div class="a" style="left:0;top:728px;width:1366px;height:40px;background:#1c1c1c"></div>
<!-- DIALOG -->
<div class="a" style="left:310px;top:183px;width:745px;height:514px;background:#fff;border:1px solid #b5222f"></div>
<svg class="a" style="left:314px;top:214px" width="737" height="481"><rect width="737" height="481" fill="#fff"/><rect width="737" height="481" fill="url(#stip)"/></svg>
<div class="a" style="left:314px;top:213px;width:737px;height:1px;background:#b5222f"></div>
<svg class="a" style="left:324px;top:190px" width="17" height="16" viewBox="0 0 17 16">
<rect x="0.5" y="0.5" width="15" height="14" fill="#f4f6fb" stroke="#5a6a8a"/>
<rect x="1" y="1" width="14" height="2" fill="#c86a8a"/>
<path d="M3 6.5 H7 M3 10.5 H7" stroke="#4a5a7a"/>
<rect x="8.5" y="5" width="5" height="3" fill="none" stroke="#4a5a7a"/>
<rect x="8.5" y="9" width="5" height="3" fill="none" stroke="#4a5a7a"/>
</svg>
<div class="t" style="left:350px;top:192.5px;font-size:12px;color:#222;letter-spacing:-0.38px">Asset Register</div>
<svg class="a" style="left:1022px;top:192px" width="12" height="12" viewBox="0 0 12 12"><path d="M1 1 L11 11 M11 1 L1 11" stroke="#333" stroke-width="1.1"/></svg>

<!-- header -->
<div class="t" style="left:370px;top:224.3px;font-size:19px;color:#000;letter-spacing:-0.5px;-webkit-text-stroke:0.2px #000">Asset Register</div>
<div class="a" style="left:325px;top:259px;width:721px;height:1px;background:#a0a0a0"></div>

<!-- DETAILS GROUP -->
<div class="a" style="left:324px;top:276px;width:373px;height:129px;border:1px solid #a0a0a0"></div>
<div class="a" style="left:333px;top:269px;width:93px;height:21px;background:#eeeeee;border-right:2px solid #707070;border-bottom:1px solid #707070"></div>
<div class="t" style="left:335px;top:274px;font-size:11px;font-weight:700;letter-spacing:0.1px">Details</div>
<div class="a" style="left:327px;top:306px;width:101px;height:18px;background:#f0f0f0;border:1px solid #c6c6c6"></div>
<div class="a" style="left:427px;top:306px;width:101px;height:18px;background:#fff;border:1px solid #c6c6c6"></div>
<div class="t" style="left:329px;top:309.5px;font-size:11.5px;letter-spacing:0.55px;color:#0a0a1e">Asset_No</div>
<div class="a" style="left:327px;top:323px;width:101px;height:21px;background:#f0f0f0;border:1px solid #c6c6c6"></div>
<div class="a" style="left:427px;top:323px;width:253px;height:21px;background:#fff;border:1px solid #c6c6c6"></div>
<div class="t" style="left:329px;top:326.5px;font-size:11.5px;letter-spacing:0.55px;color:#0a0a1e">Name</div>
<div class="a" style="left:662px;top:324px;width:17px;height:20px;background:#dedede;border:1px solid #a9a9a9;box-shadow:inset 0 0 0 1px #cfcfcf"></div>
<svg class="a" style="left:665px;top:330.0px" width="10" height="6" viewBox="0 0 10 6"><path d="M1 0.8 L5 4.8 L9 0.8" stroke="#3c3c3c" stroke-width="1.1" fill="none"/></svg>
<div class="a" style="left:327px;top:343px;width:101px;height:18px;background:#f0f0f0;border:1px solid #c6c6c6"></div>
<div class="a" style="left:427px;top:343px;width:253px;height:18px;background:#fff;border:1px solid #c6c6c6"></div>
<div class="t" style="left:329px;top:346.5px;font-size:11.5px;letter-spacing:0.55px;color:#0a0a1e">Category</div>
<div class="a" style="left:662px;top:344px;width:17px;height:17px;background:#dedede;border:1px solid #a9a9a9;box-shadow:inset 0 0 0 1px #cfcfcf"></div>
<svg class="a" style="left:665px;top:348.5px" width="10" height="6" viewBox="0 0 10 6"><path d="M1 0.8 L5 4.8 L9 0.8" stroke="#3c3c3c" stroke-width="1.1" fill="none"/></svg>
<div class="a" style="left:327px;top:360px;width:101px;height:18px;background:#f0f0f0;border:1px solid #c6c6c6"></div>
<div class="a" style="left:427px;top:360px;width:253px;height:18px;background:#fff;border:1px solid #c6c6c6"></div>
<div class="t" style="left:329px;top:363.5px;font-size:11.5px;letter-spacing:0.55px;color:#0a0a1e">Location</div>
<div class="a" style="left:662px;top:361px;width:17px;height:17px;background:#dedede;border:1px solid #a9a9a9;box-shadow:inset 0 0 0 1px #cfcfcf"></div>
<svg class="a" style="left:665px;top:365.5px" width="10" height="6" viewBox="0 0 10 6"><path d="M1 0.8 L5 4.8 L9 0.8" stroke="#3c3c3c" stroke-width="1.1" fill="none"/></svg>
<div class="a" style="left:327px;top:377px;width:101px;height:18px;background:#f0f0f0;border:1px solid #c6c6c6"></div>
<div class="a" style="left:427px;top:377px;width:253px;height:18px;background:#fff;border:1px solid #c6c6c6"></div>
<div class="t" style="left:329px;top:380.5px;font-size:11.5px;letter-spacing:0.55px;color:#0a0a1e">Donated By</div>
<div class="a" style="left:662px;top:378px;width:17px;height:17px;background:#dedede;border:1px solid #a9a9a9;box-shadow:inset 0 0 0 1px #cfcfcf"></div>
<svg class="a" style="left:665px;top:382.5px" width="10" height="6" viewBox="0 0 10 6"><path d="M1 0.8 L5 4.8 L9 0.8" stroke="#3c3c3c" stroke-width="1.1" fill="none"/></svg>
<div class="a" style="left:324px;top:415px;width:373px;height:126px;border:1px solid #a0a0a0"></div>
<div class="a" style="left:332px;top:408px;width:102px;height:17px;background:#eeeeee;border-right:2px solid #707070;border-bottom:1px solid #707070"></div>
<div class="t" style="left:335px;top:413px;font-size:11px;font-weight:700;letter-spacing:0.2px">Purchase Info</div>
<div class="a" style="left:327px;top:429px;width:108px;height:18px;background:#f0f0f0;border:1px solid #c6c6c6"></div>
<div class="a" style="left:434px;top:429px;width:244px;height:18px;background:#fff;border:1px solid #c6c6c6"></div>
<div class="t" style="left:329px;top:432.5px;font-size:11.5px;letter-spacing:0.55px;color:#0a0a1e">Invoice_No</div>
<div class="a" style="left:327px;top:446px;width:108px;height:18px;background:#f0f0f0;border:1px solid #c6c6c6"></div>
<div class="a" style="left:434px;top:446px;width:244px;height:18px;background:#fff;border:1px solid #c6c6c6"></div>
<div class="t" style="left:329px;top:449.5px;font-size:11.5px;letter-spacing:0.55px;color:#0a0a1e">Date_Purchased</div>
<div class="a" style="left:327px;top:463px;width:108px;height:18px;background:#f0f0f0;border:1px solid #c6c6c6"></div>
<div class="a" style="left:434px;top:463px;width:244px;height:18px;background:#fff;border:1px solid #c6c6c6"></div>
<div class="t" style="left:329px;top:466.5px;font-size:11.5px;letter-spacing:0.55px;color:#0a0a1e">Bought_From</div>
<div class="a" style="left:660px;top:464px;width:17px;height:17px;background:#dedede;border:1px solid #a9a9a9;box-shadow:inset 0 0 0 1px #cfcfcf"></div>
<svg class="a" style="left:663px;top:468.5px" width="10" height="6" viewBox="0 0 10 6"><path d="M1 0.8 L5 4.8 L9 0.8" stroke="#3c3c3c" stroke-width="1.1" fill="none"/></svg>
<div class="a" style="left:327px;top:480px;width:108px;height:18px;background:#f0f0f0;border:1px solid #c6c6c6"></div>
<div class="a" style="left:434px;top:480px;width:244px;height:18px;background:#fff;border:1px solid #c6c6c6"></div>
<div class="t" style="left:329px;top:483.5px;font-size:11.5px;letter-spacing:0.55px;color:#0a0a1e">Total Cost</div>
<div class="a" style="left:327px;top:497px;width:108px;height:18px;background:#f0f0f0;border:1px solid #c6c6c6"></div>
<div class="a" style="left:434px;top:497px;width:244px;height:18px;background:#fff;border:1px solid #c6c6c6"></div>
<div class="t" style="left:329px;top:500.5px;font-size:11.5px;letter-spacing:0.55px;color:#0a0a1e">Quantity</div>
<div class="a" style="left:327px;top:514px;width:108px;height:18px;background:#f0f0f0;border:1px solid #c6c6c6"></div>
<div class="a" style="left:434px;top:514px;width:244px;height:18px;background:#fff;border:1px solid #c6c6c6"></div>
<div class="t" style="left:329px;top:517.5px;font-size:11.5px;letter-spacing:0.55px;color:#0a0a1e">Value Type</div>
<div class="a" style="left:660px;top:515px;width:17px;height:17px;background:#dedede;border:1px solid #a9a9a9;box-shadow:inset 0 0 0 1px #cfcfcf"></div>
<svg class="a" style="left:663px;top:519.5px" width="10" height="6" viewBox="0 0 10 6"><path d="M1 0.8 L5 4.8 L9 0.8" stroke="#3c3c3c" stroke-width="1.1" fill="none"/></svg>
<div class="a" style="left:320px;top:554px;width:373px;height:123px;border:1px solid #a0a0a0"></div>
<div class="a" style="left:328px;top:547px;width:98px;height:17px;background:#eeeeee;border-right:2px solid #707070;border-bottom:1px solid #707070"></div>
<div class="t" style="left:331px;top:552px;font-size:11px;font-weight:700;letter-spacing:0.2px">Other</div>
<div class="a" style="left:327px;top:567px;width:101px;height:21px;background:#f0f0f0;border:1px solid #c6c6c6"></div>
<div class="a" style="left:427px;top:567px;width:255px;height:21px;background:#fff;border:1px solid #c6c6c6"></div>
<div class="t" style="left:329px;top:570.5px;font-size:11.5px;letter-spacing:0.55px;color:#0a0a1e">Manufacturer</div>
<div class="a" style="left:664px;top:568px;width:17px;height:20px;background:#dedede;border:1px solid #a9a9a9;box-shadow:inset 0 0 0 1px #cfcfcf"></div>
<svg class="a" style="left:667px;top:574.0px" width="10" height="6" viewBox="0 0 10 6"><path d="M1 0.8 L5 4.8 L9 0.8" stroke="#3c3c3c" stroke-width="1.1" fill="none"/></svg>
<div class="a" style="left:327px;top:587px;width:101px;height:21px;background:#f0f0f0;border:1px solid #c6c6c6"></div>
<div class="a" style="left:427px;top:587px;width:255px;height:21px;background:#fff;border:1px solid #c6c6c6"></div>
<div class="t" style="left:329px;top:590.5px;font-size:11.5px;letter-spacing:0.55px;color:#0a0a1e">Brand_Name</div>
<div class="a" style="left:664px;top:588px;width:17px;height:20px;background:#dedede;border:1px solid #a9a9a9;box-shadow:inset 0 0 0 1px #cfcfcf"></div>
<svg class="a" style="left:667px;top:594.0px" width="10" height="6" viewBox="0 0 10 6"><path d="M1 0.8 L5 4.8 L9 0.8" stroke="#3c3c3c" stroke-width="1.1" fill="none"/></svg>
<div class="a" style="left:327px;top:607px;width:101px;height:21px;background:#f0f0f0;border:1px solid #c6c6c6"></div>
<div class="a" style="left:427px;top:607px;width:255px;height:21px;background:#fff;border:1px solid #c6c6c6"></div>
<div class="t" style="left:329px;top:610.5px;font-size:11.5px;letter-spacing:0.55px;color:#0a0a1e">Model_No</div>
<div class="a" style="left:327px;top:627px;width:101px;height:21px;background:#f0f0f0;border:1px solid #c6c6c6"></div>
<div class="a" style="left:427px;top:627px;width:255px;height:21px;background:#fff;border:1px solid #c6c6c6"></div>
<div class="t" style="left:329px;top:630.5px;font-size:11.5px;letter-spacing:0.55px;color:#0a0a1e">Serial_No</div>
<div class="a" style="left:327px;top:647px;width:101px;height:21px;background:#f0f0f0;border:1px solid #c6c6c6"></div>
<div class="a" style="left:427px;top:647px;width:255px;height:21px;background:#fff;border:1px solid #c6c6c6"></div>
<div class="t" style="left:329px;top:650.5px;font-size:11.5px;letter-spacing:0.55px;color:#0a0a1e">Condition</div>
<div class="a" style="left:664px;top:648px;width:17px;height:20px;background:#dedede;border:1px solid #a9a9a9;box-shadow:inset 0 0 0 1px #cfcfcf"></div>
<svg class="a" style="left:667px;top:654.0px" width="10" height="6" viewBox="0 0 10 6"><path d="M1 0.8 L5 4.8 L9 0.8" stroke="#3c3c3c" stroke-width="1.1" fill="none"/></svg>
<!-- binoculars button -->
<div class="a" style="left:533px;top:277px;width:53px;height:44px;border-radius:50%;background:linear-gradient(#e4eefe,#a9c8f8);border:1px solid #5b8fd6;box-shadow:1px 2px 2px rgba(0,0,0,.35)"></div>
<div class="a" style="left:543px;top:283px;width:32px;height:32px;background:#efefef"></div>
<svg class="a" style="left:544px;top:286px" width="30" height="25" viewBox="0 0 30 25">
<path d="M5 0H12V7H13V10H17V7H18V0H25V7H26V9H29V24H19V16H17V12H13V16H11V24H1V9H4V7H5Z" fill="#000"/>
<rect x="7" y="2" width="2" height="3" fill="#888"/><rect x="19" y="2" width="2" height="3" fill="#888"/>
<rect x="2" y="12" width="2" height="6" fill="#bbb"/><rect x="20" y="12" width="2" height="6" fill="#bbb"/>
<rect x="2" y="20" width="3" height="3" fill="#aaa"/><rect x="22" y="20" width="3" height="3" fill="#aaa"/>
</svg>
<!-- top action buttons -->
<div class="a" style="left:857px;top:214px;width:46px;height:43px;border-radius:50%;background:linear-gradient(#e4eefe,#a9c8f8);border:1px dashed #334a6e;box-shadow:1px 2px 2px rgba(0,0,0,.35)"></div>
<div class="a" style="left:903px;top:214px;width:47px;height:43px;border-radius:50%;background:linear-gradient(#e4eefe,#a9c8f8);border:1px solid #5b8fd6;box-shadow:1px 2px 2px rgba(0,0,0,.35)"></div>
<div class="a" style="left:951px;top:214px;width:48px;height:43px;border-radius:50%;background:linear-gradient(#e4eefe,#a9c8f8);border:1px solid #5b8fd6;box-shadow:1px 2px 2px rgba(0,0,0,.35)"></div>
<div class="a" style="left:864px;top:218px;width:32px;height:33px;background:#efefef"></div>
<div class="a" style="left:911px;top:218px;width:32px;height:33px;background:#efefef"></div>
<div class="a" style="left:958px;top:218px;width:32px;height:33px;background:#efefef"></div>
<!-- PICTURE TAB -->
<div class="a" style="left:706px;top:274px;width:343px;height:20px;background:#f0f0f0"></div>
<div class="a" style="left:707px;top:274px;width:47px;height:20px;background:#f8f8f8;border-right:1px solid #d8d8d8"></div>
<div class="t" style="left:713px;top:279px;font-size:11.2px;color:#0a0a1e;letter-spacing:-0.2px">Picture</div>
<div class="a" style="left:706px;top:293px;width:344px;height:386px;background:#f0f0f0;border-right:2px solid #7a7a7a;border-bottom:2px solid #7a7a7a;border-top:1px solid #fff;border-left:1px solid #fff"></div>
<div class="a" style="left:713px;top:299px;width:329px;height:368px;background:#fff;border:1px solid #9a9a9a"></div>
<div class="a" style="left:717px;top:302px;width:28px;height:19px;border-radius:50%;background:#000;box-shadow:0 0 7px 3px rgba(60,100,160,.5)"></div>
<div class="t" style="left:727px;top:304px;font-size:13px;color:#fff;font-weight:700">+</div>
<div class="a" style="left:717px;top:349px;width:28px;height:19px;border-radius:50%;background:#000;box-shadow:0 0 7px 3px rgba(60,100,160,.5)"></div>
<div class="t" style="left:726px;top:353px;font-size:11.5px;color:#fff">O</div>
<!-- RIBBON ICONS -->
<svg class="a" style="left:26px;top:84px" width="36" height="36" viewBox="0 0 36 36">
<g fill="none" stroke="#333" stroke-width="1.1">
<path d="M12.5 3.5 L5.5 10.5"/><path d="M8.5 3.3 H12.7 V7.5"/>
<path d="M4.6 12 A14 14 0 0 0 3.6 20"/>
<path d="M4.6 23.5 A14 14 0 0 0 9 29"/>
<path d="M25 6 A14 14 0 0 1 30 12.5"/>
</g>
<path d="M12 25 L19 32 L33 18" fill="none" stroke="#e8443a" stroke-width="1.3"/>
</svg>
<svg class="a" style="left:100px;top:85px" width="34" height="34" viewBox="0 0 34 34">
<path d="M13 4 A11 11 0 1 0 12 27" fill="none" stroke="#7a7a7a" stroke-width="3"/>
<path d="M13 4 A11 11 0 0 1 17 5" fill="none" stroke="#7a7a7a" stroke-width="3"/>
<path d="M15 1 L19.5 5.5 L14.5 8.5Z" fill="#7a7a7a"/>
<path d="M9 16 L13 19.5 L20 10" fill="none" stroke="#e0502e" stroke-width="2.2"/>
<path d="M23.5 11 L22 14 H25Z" fill="#7a7a7a"/>
<rect x="16.5" y="18.5" width="15" height="13" fill="#fff" stroke="#7a7a7a"/>
<rect x="16.5" y="18.5" width="15" height="2.5" fill="#7a7a7a"/>
<path d="M21.5 21 V31 M26.5 21 V31" stroke="#7a7a7a"/>
</svg>
<svg class="a" style="left:175px;top:86px" width="32" height="32" viewBox="0 0 32 32">
<path d="M13 3 A11 11 0 1 0 11 26" fill="none" stroke="#7a7a7a" stroke-width="2.6"/>
<path d="M12 0.5 L16.5 4 L11.5 7Z" fill="#7a7a7a"/>
<path d="M8 15.5 L12 19 L19 10" fill="none" stroke="#e0502e" stroke-width="2.2"/>
<path d="M23 12 L21.5 15 H24.5Z" fill="#7a7a7a"/>
<rect x="15.5" y="15.5" width="10" height="3" fill="#3e7dc8"/>
<rect x="15.5" y="18.5" width="10" height="4" fill="#fff" stroke="#555" stroke-width="0.8"/>
<path d="M20.5 22.5 V25 M13 25 H28 M13 25 V27 M20.5 25 V27 M28 25 V27" stroke="#555" stroke-width="0.8" fill="none"/>
<rect x="11" y="27" width="4.5" height="4.5" fill="#cfe0f5" stroke="#3e7dc8"/>
<rect x="18.3" y="27" width="4.5" height="4.5" fill="#cfe0f5" stroke="#3e7dc8"/>
<rect x="25.5" y="27" width="4.5" height="4.5" fill="#cfe0f5" stroke="#3e7dc8"/>
</svg>
<svg class="a" style="left:233px;top:85px" width="32" height="32" viewBox="0 0 32 32">
<path d="M2.5 2.5 H26 L2.5 25Z" fill="#f7f7f7" stroke="#222" stroke-width="1.3"/>
<path d="M15 17 Q18 12 20 16 Q22 19 26 15 Q28 13 30 13" fill="none" stroke="#e8353a" stroke-width="1.3"/>
<path d="M2.5 29 Q8 25 13 25 Q17 25 19 27 Q22 28 30 24" fill="none" stroke="#e8353a" stroke-width="1.3"/>
</svg>
<!-- FORM HEADER ICON -->
<svg class="a" style="left:329px;top:217px" width="32" height="32" viewBox="0 0 32 32">
<defs><radialGradient id="scr" cx="0.4" cy="0.4" r="0.7"><stop offset="0" stop-color="#555"/><stop offset="1" stop-color="#1e1e1e"/></radialGradient></defs>
<rect x="0" y="0" width="32" height="32" fill="#f0f0f0"/>
<rect x="2" y="1.5" width="27" height="20" fill="#e4e4e4"/>
<rect x="2" y="20.5" width="27" height="1.5" fill="#3a3a3a"/>
<rect x="4.5" y="3" width="22" height="15" fill="url(#scr)"/>
<rect x="25" y="19" width="1.5" height="1.5" fill="#2bd04a"/>
<path d="M3 23 H29 L31 25 V31 H0 V26Z" fill="#e2e2e2"/>
<path d="M0 30.5 H31" stroke="#333" stroke-width="1.2"/>
<path d="M4 24.5 H27" stroke="#999" stroke-width="0.8"/>
<rect x="19" y="27" width="8" height="1.2" fill="#555"/>
<rect x="2" y="28" width="1.6" height="1.4" fill="#2bd04a"/>
<path d="M18 14 L5 27.5" stroke="#333" stroke-width="2.4" stroke-linecap="round"/>
<path d="M18 14 L5 27.5" stroke="#e8e8e8" stroke-width="1" stroke-linecap="round"/>
<path d="M19 12.5 L29.5 3.2" stroke="#6a1a08" stroke-width="5" stroke-linecap="round"/>
<path d="M19 12.3 L29.3 3" stroke="#ee5f1c" stroke-width="3.4" stroke-linecap="round"/>
<path d="M20.5 10.3 L28 3.6" stroke="#ffc090" stroke-width="0.8"/>
</svg>
<!-- power icon -->
<svg class="a" style="left:864px;top:218px" width="32" height="33" viewBox="0 0 32 33">
<circle cx="16" cy="16" r="14.5" fill="#c9281f"/>
<circle cx="16" cy="15.5" r="13" fill="#e44b3c"/>
<circle cx="16" cy="16" r="9.5" fill="none" stroke="#fff" stroke-width="3"/>
<circle cx="16" cy="16" r="7.5" fill="#d8392b"/>
<rect x="14.2" y="9" width="3.6" height="11" rx="1.8" fill="#fff"/>
<ellipse cx="16" cy="27" rx="9" ry="2.5" fill="#f08a80" opacity=".6"/>
</svg>
<!-- book icon -->
<svg class="a" style="left:911px;top:218px" width="32" height="33" viewBox="0 0 32 33">
<path d="M6 3 L24 5 V30 L6 28Z" fill="#9c2228"/>
<path d="M24 5 L27 6 V31 L24 30Z" fill="#f4f4f4" stroke="#999" stroke-width="0.5"/>
<path d="M6 3 L9 2 L27 4 V6 L24 5Z" fill="#c23a40"/>
<path d="M8 4 L10 28" stroke="#b8353a" stroke-width="1.5"/>
<path d="M19 7 L6 30" stroke="#1a1a1a" stroke-width="3"/>
<path d="M18 9 L11 21" stroke="#8ec4e8" stroke-width="1.2"/>
</svg>
<!-- floppy icon -->
<svg class="a" style="left:958px;top:218px" width="32" height="33" viewBox="0 0 32 33">
<path d="M2 3 H27 L30 6 V30 H2Z" fill="#1e1e1e"/>
<rect x="8" y="3" width="14" height="8" fill="#e8e8e8"/>
<rect x="17" y="4" width="3" height="6" fill="#111"/>
<rect x="5" y="14" width="22" height="14" fill="#c8d2d6"/>
<rect x="5" y="14" width="22" height="3" fill="#e4ebee"/>
<rect x="5" y="27" width="22" height="1" fill="#4a7ad0"/>
</svg>
<!-- TASKBAR CONTENT -->
<svg class="a" style="left:15px;top:739px" width="18" height="18" viewBox="0 0 18 18">
<path d="M0.5 2.5 L7.5 1.5 V8.3 H0.5Z M8.5 1.3 L17.5 0 V8.3 H8.5Z M0.5 9.3 H7.5 V16.2 L0.5 15.3Z M8.5 9.3 H17.5 V17.7 L8.5 16.4Z" fill="#fff"/>
</svg>
<div class="a" style="left:48px;top:728px;width:288px;height:40px;background:#f2f2f2;border-top:1px solid #c8c8c8"></div>
<svg class="a" style="left:59px;top:739px" width="18" height="18" viewBox="0 0 18 18">
<circle cx="11.3" cy="6.2" r="4.9" fill="none" stroke="#222" stroke-width="1.3"/><path d="M7.8 9.7 L1 16.5" stroke="#222" stroke-width="1.3"/>
</svg>
<div class="t" style="left:88px;top:742px;font-size:14.3px;color:#333">Type here to search</div>
<!-- petra -->
<svg class="a" style="left:255px;top:729px" width="82" height="39" viewBox="0 3 82 39">
<defs><linearGradient id="rk" x1="0" y1="0" x2="1" y2="0"><stop offset="0" stop-color="#d48a58"/><stop offset="1" stop-color="#b86d3c"/></linearGradient></defs>
<path d="M5 42 Q10 36 14 30 Q17 22 19 18 Q24 8 29 5 L60 4 Q68 10 72 13 Q79 17 81 21 V42Z" fill="url(#rk)"/>
<path d="M5 42 Q9 38 14 36 L20 42Z" fill="#e8a890"/>
<path d="M66 42 V20 Q70 15 76 18 Q81 22 81 30 V42Z" fill="#e2a078"/>
<path d="M66 42 V22 Q68 18 70 20 V42Z" fill="#f0b8a8"/>
<rect x="28" y="6" width="33" height="33" fill="#5a3420"/>
<rect x="30" y="6" width="29" height="33" fill="#b8703e"/>
<rect x="31" y="7" width="5" height="5" fill="#f2c09a"/><rect x="52" y="7" width="5" height="5" fill="#f2c09a"/>
<rect x="31" y="12" width="6" height="10" fill="#d8935e"/><rect x="51" y="12" width="6" height="10" fill="#d8935e"/>
<rect x="39" y="15" width="12" height="6" fill="#d8935e"/><rect x="42" y="9" width="5" height="6" fill="#e8a478"/>
<rect x="30" y="22" width="29" height="3" fill="#f0b48a"/>
<rect x="31" y="26" width="3" height="13" fill="#f0b090"/><rect x="36" y="26" width="3" height="13" fill="#f0b090"/>
<rect x="50" y="26" width="3" height="13" fill="#f0b090"/><rect x="55" y="26" width="3" height="13" fill="#f0b090"/>
<rect x="40" y="28" width="9" height="11" fill="#8a5030"/>
<rect x="42" y="29" width="5" height="7" fill="#2a1670"/>
<rect x="40" y="36" width="9" height="3" fill="#e0a070"/>
<rect x="24" y="39" width="42" height="3" fill="#e0a070"/>
</svg>
<!-- task view -->
<svg class="a" style="left:351px;top:739px" width="18" height="17" viewBox="0 0 18 17">
<path d="M0 1.5 H11 M0 15.5 H11" stroke="#fff" stroke-width="1"/>
<rect x="1.5" y="4.5" width="8" height="8" fill="none" stroke="#fff" stroke-width="1.2"/>
<path d="M15.5 1 V3 M15.5 6 V16" stroke="#fff" stroke-width="1.5"/>
</svg>
<!-- folder -->
<svg class="a" style="left:400px;top:738px" width="15" height="21" viewBox="0 0 15 21">
<path d="M1 2 L6 1 V20 L1 19Z" fill="#e8b640"/>
<path d="M3 3 H14 V19 H3Z" fill="#f6d574"/>
<path d="M3 19 L6 20 H14 V19Z" fill="#d9a53a"/>
</svg>
<div class="t" style="left:426px;top:741px;font-size:12.3px;color:#fff">Churchpro</div>
<div class="a" style="left:391px;top:766px;width:152px;height:2px;background:#9a9a9a"></div>
<!-- firefox -->
<svg class="a" style="left:558px;top:734px" width="28" height="27" viewBox="0 0 28 27">
<defs><linearGradient id="ffg" x1="0.2" y1="1" x2="0.8" y2="0"><stop offset="0" stop-color="#e8177f"/><stop offset="0.35" stop-color="#ff4a3a"/><stop offset="0.65" stop-color="#ff9a22"/><stop offset="1" stop-color="#ffe84a"/></linearGradient>
<radialGradient id="ffp" cx="0.4" cy="0.6" r="0.7"><stop offset="0" stop-color="#6a5ae8"/><stop offset="1" stop-color="#a24af0"/></radialGradient></defs>
<path d="M17.5 1.8 Q21 4 22.5 7 Q25 9 25 14.5 A11.3 11.3 0 1 1 3 12 Q4 8 7 5.2 L7.8 7.5 Q9 5 11 5 L11 7.5 Q14 5.5 17.5 1.8Z" fill="url(#ffg)"/>
<path d="M6 12 Q9 10 12 10.5 L10 14 Q8 13 6 12Z" fill="#ffb020"/>
<circle cx="13.8" cy="15" r="4.6" fill="url(#ffp)"/>
<path d="M11 10.5 Q14 9 17 10 Q15.5 11 16 12.5 Q13 11.5 11 10.5Z" fill="#9c4af0"/>
</svg>
<!-- mpc -->
<svg class="a" style="left:609px;top:736px" width="24" height="23" viewBox="0 0 24 23">
<path d="M2 8 L21 3 L22 6 L3 11Z" fill="#fff"/>
<path d="M5 7.5 L7 5 M10 6 L12 4 M15 5 L17 3.5" stroke="#222" stroke-width="1.5"/>
<rect x="3" y="10" width="19" height="12" fill="#fff" transform="rotate(-4 12 16)"/>
<text x="4" y="20" font-family="Liberation Sans" font-weight="700" font-size="9.5" fill="#d2572a" transform="rotate(-4 12 16)">3</text>
<text x="10" y="20" font-family="Liberation Sans" font-weight="700" font-size="9.5" fill="#3a8ad8" transform="rotate(-4 12 16)">2</text>
<text x="16" y="20" font-family="Liberation Sans" font-weight="700" font-size="9.5" fill="#3aa83a" transform="rotate(-4 12 16)">1</text>
</svg>
<!-- edge -->
<svg class="a" style="left:656px;top:734px" width="28" height="28" viewBox="0 0 28 28">
<defs><linearGradient id="eg1" x1="0" y1="0" x2="1" y2="0.4"><stop offset="0" stop-color="#2bb6f2"/><stop offset="0.55" stop-color="#2fc4c0"/><stop offset="1" stop-color="#62de4e"/></linearGradient>
<linearGradient id="eg3" x1="0" y1="0" x2="0.6" y2="1"><stop offset="0" stop-color="#1a8ae6"/><stop offset="1" stop-color="#0e5cb0"/></linearGradient></defs>
<circle cx="14" cy="14" r="12.2" fill="url(#eg1)"/>
<path d="M1.8 13.5 Q2.5 9 9 8.8 Q15 8.8 16.5 12 Q13 11.5 12 13.5 Q10.5 17 12.5 20.5 Q15 23.5 20 23.2 Q23 23 25.3 21.3 Q22 26.2 14 26.2 Q5 26 2.2 18 Q1.7 16 1.8 13.5Z" fill="url(#eg3)"/>
<path d="M12 13.5 Q13 11.2 16.3 12 Q17.5 13 17 15.2 Q17 17.5 19.5 18.5 Q22 19.3 24.2 19.3 Q20 22 15.5 20.5 Q11.5 18.5 12 13.5Z" fill="#1c1c1c"/>
</svg>
<!-- whatsapp -->
<svg class="a" style="left:706px;top:735px" width="26" height="26" viewBox="0 0 26 26">
<circle cx="13" cy="13" r="12.3" fill="#fff"/>
<circle cx="13" cy="12.5" r="7" fill="none" stroke="#25c03f" stroke-width="1.6"/>
<path d="M6.5 19.5 L7.5 15.5 L10 18Z" fill="#25c03f"/>
<path d="M10 10 Q10 9 11 9 L11.8 10.8 L11 11.6 Q12 13.5 14 14.5 L14.8 13.8 L16.5 14.5 Q16.5 15.8 15 16 Q11 15.5 10 10Z" fill="#25c03f"/>
</svg>
<!-- active app -->
<div class="a" style="left:744px;top:728px;width:160px;height:40px;background:#333232"></div>
<div class="a" style="left:744px;top:765px;width:160px;height:3px;background:#a8a8a8"></div>
<svg class="a" style="left:753px;top:735px" width="25" height="24" viewBox="0 0 25 24">
<path d="M2 2 H12 M2 2 V14 M5 4 H15 M5 4 V16" stroke="#bbb" stroke-width="1" fill="none"/>
<rect x="7.5" y="6.5" width="12" height="11" fill="#4a4a4a" stroke="#ccc"/>
<path d="M13 2 Q20 3 23 9" stroke="#ddd" fill="none" stroke-width="1.2"/>
<path d="M1 22 L20 6" stroke="#e8e8e8" stroke-width="1.4"/>
<path d="M9 20 H22" stroke="#bbb" stroke-width="1.5"/>
</svg>
<div class="t" style="left:782px;top:741px;font-size:11.7px;color:#fff">Church Manager 2...</div>
<!-- weather -->
<svg class="a" style="left:1042px;top:735px" width="26" height="25" viewBox="0 0 26 25">
<defs><linearGradient id="wg" x1="0" y1="0" x2="0.6" y2="1"><stop offset="0" stop-color="#f7c232"/><stop offset="1" stop-color="#f06a10"/></linearGradient></defs>
<circle cx="12" cy="13" r="10.2" fill="url(#wg)"/>
<circle cx="18" cy="6" r="6" fill="#d8302a"/>
<text x="15.8" y="9.5" font-family="Liberation Sans" font-size="8.5" font-weight="700" fill="#fff">1</text>
</svg>
<div class="t" style="left:1074px;top:741px;font-size:13.3px;color:#fff">25°C</div>
<svg class="a" style="left:1128px;top:743px" width="14" height="9" viewBox="0 0 14 9"><path d="M1 8 L7 1.5 L13 8" stroke="#fff" stroke-width="1.3" fill="none"/></svg>
<svg class="a" style="left:1153px;top:739px" width="13" height="18" viewBox="0 0 13 18">
<path d="M3 1.5 Q6 0.5 9 1.5 M3 16.5 Q6 17.5 9 16.5" stroke="#fff" fill="none"/>
<rect x="1" y="4.5" width="8" height="9" rx="1.5" fill="none" stroke="#fff" stroke-width="1.1"/>
<path d="M9 8 L12 6 V12 L9 10" fill="none" stroke="#fff"/>
</svg>
<svg class="a" style="left:1175px;top:740px" width="17" height="14" viewBox="0 0 17 14">
<path d="M2 1 V4 M5 1 V4 M1 4 H6 V7 Q6 9 3.5 9 Q1 9 1 7Z M3.5 9 V13" stroke="#fff" fill="none" stroke-width="1.1"/>
<rect x="6.5" y="4.5" width="9" height="7" fill="none" stroke="#fff"/><rect x="15.5" y="6.5" width="1.2" height="3" fill="#fff"/>
<rect x="8" y="6" width="4" height="4" fill="#fff"/>
</svg>
<svg class="a" style="left:1198px;top:739px" width="18" height="18" viewBox="0 0 18 18">
<g fill="none" stroke="#fff" stroke-width="1.1">
<circle cx="8" cy="8" r="7"/><ellipse cx="8" cy="8" rx="3" ry="7"/><path d="M1 8 H15 M2 4.5 H14 M2 11.5 H10"/>
<circle cx="13" cy="13" r="3.5" fill="#1c1c1c"/><path d="M10.6 15.4 L15.4 10.6"/>
</g>
</svg>
<svg class="a" style="left:1222px;top:739px" width="18" height="17" viewBox="0 0 18 17">
<g fill="none" stroke="#fff" stroke-width="1.1">
<path d="M1 6 H4 L8.5 2 V15 L4 11 H1Z"/><path d="M11 5.5 Q12.5 8.5 11 11.5"/><path d="M13 3.5 Q15.5 8.5 13 13.5"/><path d="M15 1.5 Q18.5 8.5 15 15.5"/>
</g></svg>
<div class="t" style="left:1264px;top:733px;font-size:11.6px;color:#fff;letter-spacing:-0.4px">06:47</div>
<div class="t" style="left:1249px;top:750px;font-size:11.6px;color:#fff">21/10/2025</div>
<svg class="a" style="left:1324px;top:739px" width="26" height="25" viewBox="0 0 26 25">
<path d="M1 1 H17 V12 H8 L4 16 V12 H1Z" fill="#fff"/>
<path d="M4 4 H14 M4 6.5 H14 M4 9 H11" stroke="#1c1c1c" stroke-width="1"/>
<circle cx="16.5" cy="16" r="7.5" fill="#2b2b2b" stroke="#8a8a8a" stroke-width="1"/>
<text x="13.6" y="20.3" font-family="Liberation Sans" font-size="11" font-weight="700" fill="#fff">1</text>
</svg>
<div class="a" style="left:1361px;top:728px;width:1px;height:40px;background:#7a7a7a"></div>
</body></html>
